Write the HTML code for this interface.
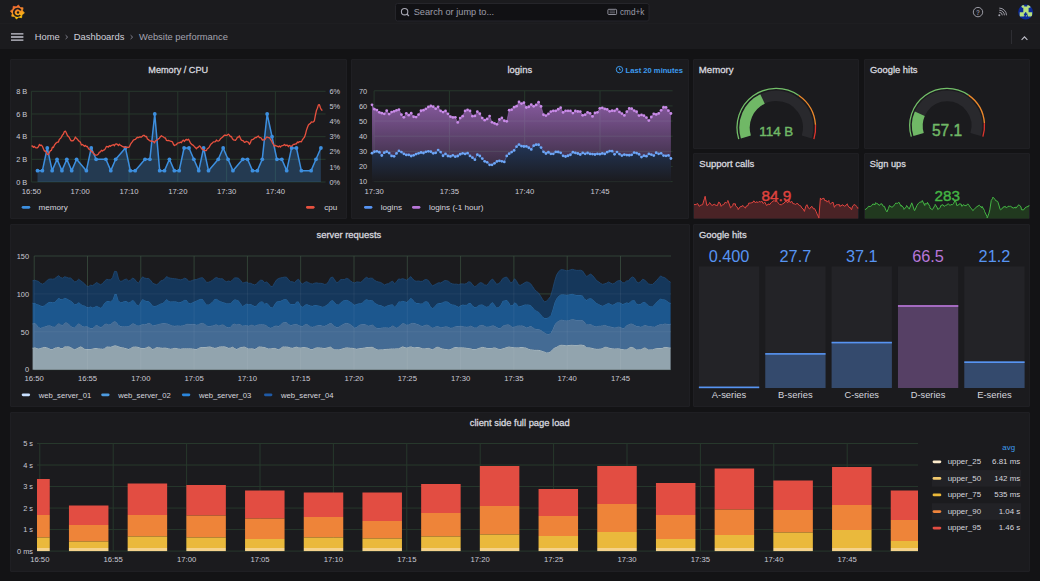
<!DOCTYPE html>
<html><head><meta charset="utf-8"><style>
*{margin:0;padding:0;box-sizing:border-box}
html,body{width:1040px;height:581px;overflow:hidden;background:#131315;font-family:"Liberation Sans",sans-serif}
.bar1{position:absolute;left:0;top:0;width:1040px;height:24px;background:#1b1b1e;border-bottom:1px solid #1e1e21}
.bar2{position:absolute;left:0;top:24px;width:1040px;height:25px;background:#1b1b1e}
.pn{position:absolute;background:#1b1b1e;border:1px solid #1f1f23;border-radius:1px}
svg{position:absolute;left:0;top:0}
</style></head><body>
<div class="bar1"></div><div class="bar2"></div>
<div class="pn" style="left:10px;top:59px;width:337px;height:160px"></div><div class="pn" style="left:351px;top:59px;width:338px;height:160px"></div><div class="pn" style="left:693px;top:59px;width:166px;height:90px"></div><div class="pn" style="left:864px;top:59px;width:166px;height:90px"></div><div class="pn" style="left:693px;top:153px;width:166px;height:66px"></div><div class="pn" style="left:864px;top:153px;width:166px;height:66px"></div><div class="pn" style="left:10px;top:224px;width:680px;height:183px"></div><div class="pn" style="left:693px;top:224px;width:337px;height:183px"></div><div class="pn" style="left:10px;top:412px;width:1020px;height:160px"></div>
<svg width="1040" height="581" viewBox="0 0 1040 581" font-family="Liberation Sans, sans-serif">
<defs><linearGradient id="lg" x1="0" y1="0" x2="0.3" y2="1"><stop offset="0" stop-color="#f05a34"/><stop offset="0.5" stop-color="#f68a2a"/><stop offset="1" stop-color="#fcc30c"/></linearGradient></defs><path d="M18.46,4.98 L20.14,7.46 L23.11,7.79 L22.54,10.73 L24.42,13.06 L21.94,14.74 L21.61,17.71 L18.67,17.14 L16.34,19.02 L14.66,16.54 L11.69,16.21 L12.26,13.27 L10.38,10.94 L12.86,9.26 L13.19,6.29 L16.13,6.86 Z" fill="url(#lg)" stroke="url(#lg)" stroke-width="0.7" stroke-linejoin="round"/><path d="M20.29,14.99 A3.8,3.8 0 1 1 20.89,10.40" fill="none" stroke="#1b1b1e" stroke-width="1.7"/><circle cx="18.0" cy="12.5" r="1.2" fill="#1b1b1e"/><rect x="395.5" y="3.5" width="253.5" height="17.5" rx="2" fill="#111114" stroke="#25252a" stroke-width="1"/><circle cx="404.6" cy="11.7" r="3.2" fill="none" stroke="#a8a8b4" stroke-width="1.1"/><path d="M406.9,14 L408.9,16" stroke="#a8a8b4" stroke-width="1.1"/><text x="413.7" y="15.1" font-size="9.23" fill="#9c9ca8">Search or jump to...</text><rect x="607.9" y="9.3" width="8.7" height="5.2" rx="0.8" fill="none" stroke="#9c9ca8" stroke-width="0.9"/><path d="M609.6,11 h5.4 M609.6,12.8 h5.4" stroke="#9c9ca8" stroke-width="0.6"/><text x="620" y="14.9" font-size="8.2" fill="#9c9ca8">cmd+k</text><circle cx="978" cy="12.1" r="4.7" fill="none" stroke="#a8a8b2" stroke-width="0.9"/><text x="978" y="14.5" font-size="6.4" fill="#88889a" text-anchor="middle" font-weight="bold">?</text><circle cx="999.3" cy="15.3" r="1.0" fill="#a8a8b2"/><path d="M999.3,12.3 A3,3 0 0 1 1002.3,15.3 M999.3,10.2 A5.1,5.1 0 0 1 1004.4,15.3 M999.3,8.1 A7.2,7.2 0 0 1 1006.5,15.3" fill="none" stroke="#a8a8b2" stroke-width="0.9"/><circle cx="1025.6" cy="12" r="7.4" fill="#0c2a9a"/><clipPath id="av"><circle cx="1025.6" cy="12" r="7.4"/></clipPath><g clip-path="url(#av)"><path d="M1021,5.3 h3.2 v1.1 h3 v-1.1 h3.2 v2.4 h-1.8 v4.5 h3.6 v4.4 h-4.2 v-1.3 h-0.9 v1.3 h-2.3 v-1.3 h-0.9 v1.3 h-4.2 v-4.4 h3.6 v-4.5 h-1.3 Z" fill="#b6e07e"/><path d="M1023.9,14.3 h3.5 M1025.65,12.2 v4.6" stroke="#0c2a9a" stroke-width="1.4"/></g><path d="M11,33.8 h12.4 M11,37 h12.4 M11,40.2 h12.4" stroke="#c8c8d2" stroke-width="1.3"/><text x="34.7" y="40.0" font-size="9.4" fill="#d0d0da">Home</text><path d="M65.6,35.2 l2,1.9 l-2,1.9" fill="none" stroke="#8c8c98" stroke-width="0.9"/><text x="73.8" y="40.0" font-size="9.4" fill="#d0d0da">Dashboards</text><path d="M130.6,35.2 l2,1.9 l-2,1.9" fill="none" stroke="#8c8c98" stroke-width="0.9"/><text x="139" y="40.0" font-size="9.4" fill="#a4a4b0">Website performance</text><path d="M1011.5,30 V44" stroke="#2e2e33" stroke-width="1"/><path d="M1021.6,39.8 l2.9,-2.9 l2.9,2.9" fill="none" stroke="#c0c0ca" stroke-width="1.1"/>
<text x="178.20" y="72.70" font-size="9.0" fill="#d6d6de" font-weight="normal" text-anchor="middle" stroke="#d6d6de" stroke-width="0.3" textLength="59.8" lengthAdjust="spacingAndGlyphs">Memory / CPU</text><line x1="31.4" y1="91.30" x2="325.6" y2="91.30" stroke="#27382c" stroke-width="1"/><text x="27.30" y="94.00" font-size="7.4" fill="#cacad4" font-weight="normal" text-anchor="end" >8 B</text><line x1="31.4" y1="113.97" x2="325.6" y2="113.97" stroke="#27382c" stroke-width="1"/><text x="27.30" y="116.67" font-size="7.4" fill="#cacad4" font-weight="normal" text-anchor="end" >6 B</text><line x1="31.4" y1="136.65" x2="325.6" y2="136.65" stroke="#27382c" stroke-width="1"/><text x="27.30" y="139.35" font-size="7.4" fill="#cacad4" font-weight="normal" text-anchor="end" >4 B</text><line x1="31.4" y1="159.32" x2="325.6" y2="159.32" stroke="#27382c" stroke-width="1"/><text x="27.30" y="162.02" font-size="7.4" fill="#cacad4" font-weight="normal" text-anchor="end" >2 B</text><line x1="31.4" y1="182.00" x2="325.6" y2="182.00" stroke="#27382c" stroke-width="1"/><text x="27.30" y="184.70" font-size="7.4" fill="#cacad4" font-weight="normal" text-anchor="end" >0 B</text><text x="329.50" y="94.00" font-size="7.4" fill="#cacad4" font-weight="normal" text-anchor="start" >6%</text><text x="329.50" y="109.12" font-size="7.4" fill="#cacad4" font-weight="normal" text-anchor="start" >5%</text><text x="329.50" y="124.23" font-size="7.4" fill="#cacad4" font-weight="normal" text-anchor="start" >4%</text><text x="329.50" y="139.35" font-size="7.4" fill="#cacad4" font-weight="normal" text-anchor="start" >3%</text><text x="329.50" y="154.47" font-size="7.4" fill="#cacad4" font-weight="normal" text-anchor="start" >2%</text><text x="329.50" y="169.58" font-size="7.4" fill="#cacad4" font-weight="normal" text-anchor="start" >1%</text><text x="329.50" y="184.70" font-size="7.4" fill="#cacad4" font-weight="normal" text-anchor="start" >0%</text><line x1="31.40" y1="91.3" x2="31.40" y2="182.0" stroke="#27382c" stroke-width="1"/><text x="31.40" y="194.30" font-size="7.7" fill="#cacad4" font-weight="normal" text-anchor="middle" >16:50</text><line x1="80.20" y1="91.3" x2="80.20" y2="182.0" stroke="#27382c" stroke-width="1"/><text x="80.20" y="194.30" font-size="7.7" fill="#cacad4" font-weight="normal" text-anchor="middle" >17:00</text><line x1="129.00" y1="91.3" x2="129.00" y2="182.0" stroke="#27382c" stroke-width="1"/><text x="129.00" y="194.30" font-size="7.7" fill="#cacad4" font-weight="normal" text-anchor="middle" >17:10</text><line x1="177.80" y1="91.3" x2="177.80" y2="182.0" stroke="#27382c" stroke-width="1"/><text x="177.80" y="194.30" font-size="7.7" fill="#cacad4" font-weight="normal" text-anchor="middle" >17:20</text><line x1="226.60" y1="91.3" x2="226.60" y2="182.0" stroke="#27382c" stroke-width="1"/><text x="226.60" y="194.30" font-size="7.7" fill="#cacad4" font-weight="normal" text-anchor="middle" >17:30</text><line x1="275.40" y1="91.3" x2="275.40" y2="182.0" stroke="#27382c" stroke-width="1"/><text x="275.40" y="194.30" font-size="7.7" fill="#cacad4" font-weight="normal" text-anchor="middle" >17:40</text><path d="M37.50,170.66 L42.39,170.66 L47.27,147.99 L52.16,170.66 L57.04,159.32 L61.93,170.66 L66.82,159.32 L71.70,170.66 L76.59,159.32 L86.36,170.66 L91.25,147.99 L96.13,159.32 L105.90,159.32 L110.79,170.66 L115.68,159.32 L125.45,147.99 L130.33,170.66 L135.22,170.66 L144.99,159.32 L149.88,159.32 L154.76,113.97 L159.65,170.66 L164.54,170.66 L169.42,159.32 L174.31,170.66 L179.19,170.66 L184.08,147.99 L188.97,147.99 L193.85,159.32 L198.74,170.66 L203.62,147.99 L208.51,170.66 L218.28,159.32 L223.17,147.99 L228.05,159.32 L232.94,170.66 L242.71,159.32 L247.60,159.32 L252.48,170.66 L257.37,170.66 L262.26,159.32 L267.14,113.97 L272.03,136.65 L276.91,159.32 L281.80,159.32 L286.69,170.66 L291.57,147.99 L296.46,147.99 L301.34,170.66 L311.12,170.66 L316.00,159.32 L320.89,147.99 L320.89,182.0 L37.50,182.0 Z" fill="#3d8fdf" fill-opacity="0.27"/><path d="M37.50,170.66 L42.39,170.66 L47.27,147.99 L52.16,170.66 L57.04,159.32 L61.93,170.66 L66.82,159.32 L71.70,170.66 L76.59,159.32 L86.36,170.66 L91.25,147.99 L96.13,159.32 L105.90,159.32 L110.79,170.66 L115.68,159.32 L125.45,147.99 L130.33,170.66 L135.22,170.66 L144.99,159.32 L149.88,159.32 L154.76,113.97 L159.65,170.66 L164.54,170.66 L169.42,159.32 L174.31,170.66 L179.19,170.66 L184.08,147.99 L188.97,147.99 L193.85,159.32 L198.74,170.66 L203.62,147.99 L208.51,170.66 L218.28,159.32 L223.17,147.99 L228.05,159.32 L232.94,170.66 L242.71,159.32 L247.60,159.32 L252.48,170.66 L257.37,170.66 L262.26,159.32 L267.14,113.97 L272.03,136.65 L276.91,159.32 L281.80,159.32 L286.69,170.66 L291.57,147.99 L296.46,147.99 L301.34,170.66 L311.12,170.66 L316.00,159.32 L320.89,147.99" fill="none" stroke="#3d8fdf" stroke-width="1.5" stroke-linejoin="round"/><circle cx="37.50" cy="170.66" r="1.9" fill="#3d8fdf"/><circle cx="42.39" cy="170.66" r="1.9" fill="#3d8fdf"/><circle cx="47.27" cy="147.99" r="1.9" fill="#3d8fdf"/><circle cx="52.16" cy="170.66" r="1.9" fill="#3d8fdf"/><circle cx="57.04" cy="159.32" r="1.9" fill="#3d8fdf"/><circle cx="61.93" cy="170.66" r="1.9" fill="#3d8fdf"/><circle cx="66.82" cy="159.32" r="1.9" fill="#3d8fdf"/><circle cx="71.70" cy="170.66" r="1.9" fill="#3d8fdf"/><circle cx="76.59" cy="159.32" r="1.9" fill="#3d8fdf"/><circle cx="86.36" cy="170.66" r="1.9" fill="#3d8fdf"/><circle cx="91.25" cy="147.99" r="1.9" fill="#3d8fdf"/><circle cx="96.13" cy="159.32" r="1.9" fill="#3d8fdf"/><circle cx="105.90" cy="159.32" r="1.9" fill="#3d8fdf"/><circle cx="110.79" cy="170.66" r="1.9" fill="#3d8fdf"/><circle cx="115.68" cy="159.32" r="1.9" fill="#3d8fdf"/><circle cx="125.45" cy="147.99" r="1.9" fill="#3d8fdf"/><circle cx="130.33" cy="170.66" r="1.9" fill="#3d8fdf"/><circle cx="135.22" cy="170.66" r="1.9" fill="#3d8fdf"/><circle cx="144.99" cy="159.32" r="1.9" fill="#3d8fdf"/><circle cx="149.88" cy="159.32" r="1.9" fill="#3d8fdf"/><circle cx="154.76" cy="113.97" r="1.9" fill="#3d8fdf"/><circle cx="159.65" cy="170.66" r="1.9" fill="#3d8fdf"/><circle cx="164.54" cy="170.66" r="1.9" fill="#3d8fdf"/><circle cx="169.42" cy="159.32" r="1.9" fill="#3d8fdf"/><circle cx="174.31" cy="170.66" r="1.9" fill="#3d8fdf"/><circle cx="179.19" cy="170.66" r="1.9" fill="#3d8fdf"/><circle cx="184.08" cy="147.99" r="1.9" fill="#3d8fdf"/><circle cx="188.97" cy="147.99" r="1.9" fill="#3d8fdf"/><circle cx="193.85" cy="159.32" r="1.9" fill="#3d8fdf"/><circle cx="198.74" cy="170.66" r="1.9" fill="#3d8fdf"/><circle cx="203.62" cy="147.99" r="1.9" fill="#3d8fdf"/><circle cx="208.51" cy="170.66" r="1.9" fill="#3d8fdf"/><circle cx="218.28" cy="159.32" r="1.9" fill="#3d8fdf"/><circle cx="223.17" cy="147.99" r="1.9" fill="#3d8fdf"/><circle cx="228.05" cy="159.32" r="1.9" fill="#3d8fdf"/><circle cx="232.94" cy="170.66" r="1.9" fill="#3d8fdf"/><circle cx="242.71" cy="159.32" r="1.9" fill="#3d8fdf"/><circle cx="247.60" cy="159.32" r="1.9" fill="#3d8fdf"/><circle cx="252.48" cy="170.66" r="1.9" fill="#3d8fdf"/><circle cx="257.37" cy="170.66" r="1.9" fill="#3d8fdf"/><circle cx="262.26" cy="159.32" r="1.9" fill="#3d8fdf"/><circle cx="267.14" cy="113.97" r="1.9" fill="#3d8fdf"/><circle cx="272.03" cy="136.65" r="1.9" fill="#3d8fdf"/><circle cx="276.91" cy="159.32" r="1.9" fill="#3d8fdf"/><circle cx="281.80" cy="159.32" r="1.9" fill="#3d8fdf"/><circle cx="286.69" cy="170.66" r="1.9" fill="#3d8fdf"/><circle cx="291.57" cy="147.99" r="1.9" fill="#3d8fdf"/><circle cx="296.46" cy="147.99" r="1.9" fill="#3d8fdf"/><circle cx="301.34" cy="170.66" r="1.9" fill="#3d8fdf"/><circle cx="311.12" cy="170.66" r="1.9" fill="#3d8fdf"/><circle cx="316.00" cy="159.32" r="1.9" fill="#3d8fdf"/><circle cx="320.89" cy="147.99" r="1.9" fill="#3d8fdf"/><path d="M31.40,146.09 L32.40,145.99 L33.40,147.24 L34.40,146.33 L35.40,147.65 L36.40,147.85 L37.40,147.76 L38.40,146.83 L39.40,144.39 L40.40,145.51 L41.40,145.12 L42.40,146.33 L43.40,148.67 L44.40,151.12 L45.40,150.96 L46.40,152.41 L47.40,154.47 L48.40,154.69 L49.40,152.45 L50.40,150.59 L51.40,150.29 L52.40,147.18 L53.40,147.56 L54.40,145.17 L55.40,143.81 L56.40,142.75 L57.40,142.14 L58.40,142.01 L59.40,139.24 L60.40,138.54 L61.40,137.16 L62.40,135.12 L63.40,133.97 L64.40,131.50 L65.40,131.18 L66.40,132.98 L67.40,135.42 L68.40,136.42 L69.40,137.69 L70.40,139.73 L71.40,140.97 L72.40,140.76 L73.40,140.50 L74.40,139.06 L75.40,137.03 L76.40,138.45 L77.40,139.10 L78.40,140.55 L79.40,141.47 L80.40,142.09 L81.40,144.98 L82.40,144.52 L83.40,145.37 L84.40,146.30 L85.40,145.34 L86.40,146.64 L87.40,146.49 L88.40,148.49 L89.40,149.51 L90.40,150.13 L91.40,151.73 L92.40,151.61 L93.40,153.37 L94.40,154.17 L95.40,155.14 L96.40,155.07 L97.40,154.83 L98.40,154.04 L99.40,152.10 L100.40,151.97 L101.40,150.26 L102.40,151.04 L103.40,150.17 L104.40,149.86 L105.40,148.52 L106.40,146.52 L107.40,146.63 L108.40,147.09 L109.40,145.70 L110.40,146.35 L111.40,145.46 L112.40,145.06 L113.40,144.63 L114.40,145.70 L115.40,144.07 L116.40,143.96 L117.40,144.35 L118.40,145.56 L119.40,144.23 L120.40,145.22 L121.40,145.68 L122.40,146.60 L123.40,146.73 L124.40,147.41 L125.40,146.91 L126.40,147.65 L127.40,147.15 L128.40,147.45 L129.40,146.85 L130.40,144.43 L131.40,142.98 L132.40,141.60 L133.40,140.10 L134.40,139.73 L135.40,139.44 L136.40,138.29 L137.40,137.27 L138.40,137.60 L139.40,137.00 L140.40,136.89 L141.40,137.17 L142.40,136.14 L143.40,135.29 L144.40,135.45 L145.40,136.57 L146.40,136.33 L147.40,139.02 L148.40,139.56 L149.40,140.50 L150.40,141.10 L151.40,140.93 L152.40,141.45 L153.40,141.35 L154.40,142.92 L155.40,141.05 L156.40,140.31 L157.40,139.84 L158.40,138.87 L159.40,138.22 L160.40,136.65 L161.40,135.68 L162.40,136.48 L163.40,136.88 L164.40,137.91 L165.40,137.89 L166.40,140.34 L167.40,140.57 L168.40,140.29 L169.40,140.74 L170.40,141.18 L171.40,141.47 L172.40,141.81 L173.40,144.26 L174.40,145.55 L175.40,145.01 L176.40,144.55 L177.40,143.25 L178.40,142.78 L179.40,142.76 L180.40,142.11 L181.40,142.74 L182.40,140.90 L183.40,140.13 L184.40,141.48 L185.40,140.14 L186.40,139.37 L187.40,140.16 L188.40,139.13 L189.40,140.83 L190.40,142.98 L191.40,144.00 L192.40,144.91 L193.40,145.29 L194.40,146.75 L195.40,147.60 L196.40,148.73 L197.40,147.50 L198.40,147.24 L199.40,145.93 L200.40,146.47 L201.40,148.39 L202.40,149.49 L203.40,149.78 L204.40,150.19 L205.40,150.71 L206.40,150.54 L207.40,148.52 L208.40,148.10 L209.40,146.77 L210.40,144.90 L211.40,143.64 L212.40,142.90 L213.40,141.83 L214.40,141.95 L215.40,141.73 L216.40,139.97 L217.40,140.95 L218.40,141.05 L219.40,140.51 L220.40,138.83 L221.40,138.04 L222.40,137.29 L223.40,136.23 L224.40,135.25 L225.40,135.14 L226.40,135.45 L227.40,135.08 L228.40,134.10 L229.40,135.15 L230.40,136.69 L231.40,136.51 L232.40,138.77 L233.40,139.77 L234.40,140.02 L235.40,140.45 L236.40,139.10 L237.40,137.25 L238.40,137.22 L239.40,135.89 L240.40,138.33 L241.40,140.17 L242.40,140.52 L243.40,140.96 L244.40,142.30 L245.40,142.10 L246.40,141.35 L247.40,141.76 L248.40,142.31 L249.40,144.32 L250.40,142.67 L251.40,139.85 L252.40,139.71 L253.40,139.18 L254.40,138.29 L255.40,137.42 L256.40,137.57 L257.40,136.48 L258.40,136.00 L259.40,137.66 L260.40,137.58 L261.40,138.34 L262.40,140.15 L263.40,139.79 L264.40,139.92 L265.40,139.07 L266.40,137.09 L267.40,137.19 L268.40,137.52 L269.40,137.67 L270.40,139.17 L271.40,140.52 L272.40,142.84 L273.40,144.26 L274.40,146.28 L275.40,145.42 L276.40,145.88 L277.40,146.27 L278.40,146.91 L279.40,145.94 L280.40,146.94 L281.40,145.86 L282.40,145.67 L283.40,145.40 L284.40,144.42 L285.40,145.51 L286.40,145.25 L287.40,145.11 L288.40,146.70 L289.40,145.45 L290.40,146.05 L291.40,146.22 L292.40,145.38 L293.40,144.42 L294.40,144.30 L295.40,143.88 L296.40,143.84 L297.40,141.98 L298.40,142.58 L299.40,141.71 L300.40,141.52 L301.40,141.83 L302.40,139.80 L303.40,138.41 L304.40,137.31 L305.40,134.54 L306.40,130.35 L307.40,127.44 L308.40,125.00 L309.40,124.02 L310.40,123.38 L311.40,121.91 L312.40,122.07 L313.40,121.96 L314.40,120.72 L315.40,115.24 L316.40,110.59 L317.40,108.28 L318.40,104.91 L319.40,104.66 L320.40,107.68 L321.40,109.72 L322.40,110.56" fill="none" stroke="#e8513f" stroke-width="1.3" stroke-linejoin="round"/><rect x="21.7" y="206.0" width="8.6" height="2.7" rx="1.35" fill="#3d8fdf"/><text x="38.60" y="210.00" font-size="8.1" fill="#d6d6de" font-weight="normal" text-anchor="start" >memory</text><rect x="306" y="206.0" width="8.6" height="2.7" rx="1.35" fill="#e8513f"/><text x="337.20" y="210.00" font-size="8.1" fill="#d6d6de" font-weight="normal" text-anchor="end" >cpu</text><text x="519.80" y="72.80" font-size="9.0" fill="#d6d6de" font-weight="normal" text-anchor="middle" stroke="#d6d6de" stroke-width="0.3" textLength="24.6" lengthAdjust="spacingAndGlyphs">logins</text><text x="683.00" y="72.50" font-size="7.6" fill="#3d9bf0" font-weight="bold" text-anchor="end" >Last 20 minutes</text><circle cx="619.5" cy="69.6" r="3.2" fill="none" stroke="#3d9bf0" stroke-width="1"/><path d="M619.5,67.8 V69.8 H620.9" fill="none" stroke="#3d9bf0" stroke-width="0.9"/><line x1="374.1" y1="90.80" x2="672.6" y2="90.80" stroke="#27382c" stroke-width="1"/><text x="367.20" y="93.50" font-size="7.4" fill="#cacad4" font-weight="normal" text-anchor="end" >70</text><line x1="374.1" y1="105.93" x2="672.6" y2="105.93" stroke="#27382c" stroke-width="1"/><text x="367.20" y="108.63" font-size="7.4" fill="#cacad4" font-weight="normal" text-anchor="end" >60</text><line x1="374.1" y1="121.07" x2="672.6" y2="121.07" stroke="#27382c" stroke-width="1"/><text x="367.20" y="123.77" font-size="7.4" fill="#cacad4" font-weight="normal" text-anchor="end" >50</text><line x1="374.1" y1="136.20" x2="672.6" y2="136.20" stroke="#27382c" stroke-width="1"/><text x="367.20" y="138.90" font-size="7.4" fill="#cacad4" font-weight="normal" text-anchor="end" >40</text><line x1="374.1" y1="151.33" x2="672.6" y2="151.33" stroke="#27382c" stroke-width="1"/><text x="367.20" y="154.03" font-size="7.4" fill="#cacad4" font-weight="normal" text-anchor="end" >30</text><line x1="374.1" y1="166.47" x2="672.6" y2="166.47" stroke="#27382c" stroke-width="1"/><text x="367.20" y="169.17" font-size="7.4" fill="#cacad4" font-weight="normal" text-anchor="end" >20</text><line x1="374.1" y1="181.60" x2="672.6" y2="181.60" stroke="#27382c" stroke-width="1"/><text x="367.20" y="184.30" font-size="7.4" fill="#cacad4" font-weight="normal" text-anchor="end" >10</text><line x1="374.10" y1="90.8" x2="374.10" y2="181.6" stroke="#27382c" stroke-width="1"/><text x="374.10" y="194.30" font-size="7.7" fill="#cacad4" font-weight="normal" text-anchor="middle" >17:30</text><line x1="449.40" y1="90.8" x2="449.40" y2="181.6" stroke="#27382c" stroke-width="1"/><text x="449.40" y="194.30" font-size="7.7" fill="#cacad4" font-weight="normal" text-anchor="middle" >17:35</text><line x1="524.70" y1="90.8" x2="524.70" y2="181.6" stroke="#27382c" stroke-width="1"/><text x="524.70" y="194.30" font-size="7.7" fill="#cacad4" font-weight="normal" text-anchor="middle" >17:40</text><line x1="600.00" y1="90.8" x2="600.00" y2="181.6" stroke="#27382c" stroke-width="1"/><text x="600.00" y="194.30" font-size="7.7" fill="#cacad4" font-weight="normal" text-anchor="middle" >17:45</text><defs><linearGradient id="gp" x1="0" y1="0" x2="0" y2="1"><stop offset="0" stop-color="#b877d9" stop-opacity="0.68"/><stop offset="1" stop-color="#b877d9" stop-opacity="0.08"/></linearGradient><linearGradient id="gb" x1="0" y1="0" x2="0" y2="1"><stop offset="0" stop-color="#223556"/><stop offset="1" stop-color="#1b1b1f"/></linearGradient></defs><path d="M372.00,104.82 L374.45,109.22 L376.90,110.04 L379.35,112.32 L381.80,113.16 L384.25,113.78 L386.70,110.68 L389.15,114.10 L391.60,112.09 L394.05,111.28 L396.50,110.34 L398.95,109.59 L401.40,114.54 L403.85,117.31 L406.30,113.32 L408.75,115.18 L411.20,113.24 L413.65,116.76 L416.10,117.03 L418.55,114.57 L421.00,110.75 L423.45,110.15 L425.90,108.85 L428.35,106.96 L430.80,106.01 L433.25,106.63 L435.70,108.65 L438.15,106.83 L440.60,110.82 L443.05,112.08 L445.50,110.97 L447.95,113.83 L450.40,116.59 L452.85,117.41 L455.30,117.34 L457.75,122.47 L460.20,118.07 L462.65,116.16 L465.10,110.96 L467.55,109.86 L470.00,110.93 L472.45,116.19 L474.90,115.93 L477.35,111.71 L479.80,113.77 L482.25,118.08 L484.70,120.18 L487.15,118.93 L489.60,116.07 L492.05,122.34 L494.50,123.29 L496.95,124.28 L499.40,119.50 L501.85,117.94 L504.30,120.77 L506.75,121.28 L509.20,110.14 L511.65,109.66 L514.10,107.14 L516.55,106.15 L519.00,101.89 L521.45,103.60 L523.90,102.67 L526.35,107.50 L528.80,106.74 L531.25,104.59 L533.70,106.34 L536.15,104.88 L538.60,102.18 L541.05,106.40 L543.50,114.77 L545.95,115.57 L548.40,113.90 L550.85,111.54 L553.30,110.79 L555.75,110.78 L558.20,109.24 L560.65,107.72 L563.10,112.39 L565.55,110.83 L568.00,110.81 L570.45,110.93 L572.90,113.09 L575.35,111.02 L577.80,111.49 L580.25,111.58 L582.70,115.29 L585.15,114.64 L587.60,112.28 L590.05,113.34 L592.50,116.40 L594.95,112.92 L597.40,112.36 L599.85,108.35 L602.30,107.78 L604.75,108.94 L607.20,109.39 L609.65,111.34 L612.10,110.72 L614.55,110.78 L617.00,109.17 L619.45,111.91 L621.90,113.56 L624.35,115.41 L626.80,111.63 L629.25,108.47 L631.70,108.68 L634.15,110.60 L636.60,111.73 L639.05,115.58 L641.50,114.91 L643.95,115.70 L646.40,117.53 L648.85,120.55 L651.30,116.99 L653.75,113.78 L656.20,114.47 L658.65,113.45 L661.10,110.33 L663.55,107.25 L666.00,107.33 L668.45,110.66 L670.90,113.51 L670.90,181.6 L372.00,181.6 Z" fill="url(#gp)"/><path d="M372.00,153.19 L374.45,151.75 L376.90,151.34 L379.35,152.24 L381.80,155.48 L384.25,152.72 L386.70,151.71 L389.15,153.03 L391.60,155.88 L394.05,156.28 L396.50,153.42 L398.95,150.88 L401.40,152.06 L403.85,153.85 L406.30,154.96 L408.75,154.80 L411.20,155.99 L413.65,155.32 L416.10,154.05 L418.55,153.37 L421.00,152.48 L423.45,152.98 L425.90,151.85 L428.35,151.33 L430.80,151.69 L433.25,153.32 L435.70,152.84 L438.15,150.12 L440.60,152.06 L443.05,155.74 L445.50,153.89 L447.95,156.01 L450.40,156.43 L452.85,155.32 L455.30,156.68 L457.75,155.98 L460.20,154.27 L462.65,153.34 L465.10,153.94 L467.55,153.19 L470.00,155.90 L472.45,157.65 L474.90,159.65 L477.35,154.67 L479.80,155.99 L482.25,158.58 L484.70,161.29 L487.15,162.32 L489.60,164.80 L492.05,164.79 L494.50,163.36 L496.95,161.44 L499.40,160.85 L501.85,161.33 L504.30,161.89 L506.75,155.95 L509.20,153.70 L511.65,152.10 L514.10,150.38 L516.55,146.66 L519.00,144.54 L521.45,146.11 L523.90,146.48 L526.35,146.45 L528.80,147.74 L531.25,149.39 L533.70,145.76 L536.15,144.69 L538.60,144.76 L541.05,147.61 L543.50,151.82 L545.95,153.49 L548.40,152.27 L550.85,153.81 L553.30,153.82 L555.75,151.97 L558.20,151.99 L560.65,152.79 L563.10,155.81 L565.55,156.49 L568.00,155.74 L570.45,154.73 L572.90,152.24 L575.35,152.93 L577.80,153.52 L580.25,154.52 L582.70,152.93 L585.15,153.83 L587.60,153.01 L590.05,153.88 L592.50,154.12 L594.95,154.51 L597.40,153.83 L599.85,154.14 L602.30,153.43 L604.75,153.95 L607.20,152.18 L609.65,151.03 L612.10,151.20 L614.55,154.35 L617.00,152.08 L619.45,154.04 L621.90,155.55 L624.35,154.61 L626.80,155.05 L629.25,155.24 L631.70,154.84 L634.15,152.57 L636.60,153.10 L639.05,154.24 L641.50,157.08 L643.95,155.68 L646.40,156.14 L648.85,153.93 L651.30,154.58 L653.75,155.62 L656.20,152.75 L658.65,153.86 L661.10,153.33 L663.55,155.53 L666.00,155.84 L668.45,155.39 L670.90,158.48 L670.90,181.6 L372.00,181.6 Z" fill="url(#gb)"/><path d="M372.00,104.82 L374.45,109.22 L376.90,110.04 L379.35,112.32 L381.80,113.16 L384.25,113.78 L386.70,110.68 L389.15,114.10 L391.60,112.09 L394.05,111.28 L396.50,110.34 L398.95,109.59 L401.40,114.54 L403.85,117.31 L406.30,113.32 L408.75,115.18 L411.20,113.24 L413.65,116.76 L416.10,117.03 L418.55,114.57 L421.00,110.75 L423.45,110.15 L425.90,108.85 L428.35,106.96 L430.80,106.01 L433.25,106.63 L435.70,108.65 L438.15,106.83 L440.60,110.82 L443.05,112.08 L445.50,110.97 L447.95,113.83 L450.40,116.59 L452.85,117.41 L455.30,117.34 L457.75,122.47 L460.20,118.07 L462.65,116.16 L465.10,110.96 L467.55,109.86 L470.00,110.93 L472.45,116.19 L474.90,115.93 L477.35,111.71 L479.80,113.77 L482.25,118.08 L484.70,120.18 L487.15,118.93 L489.60,116.07 L492.05,122.34 L494.50,123.29 L496.95,124.28 L499.40,119.50 L501.85,117.94 L504.30,120.77 L506.75,121.28 L509.20,110.14 L511.65,109.66 L514.10,107.14 L516.55,106.15 L519.00,101.89 L521.45,103.60 L523.90,102.67 L526.35,107.50 L528.80,106.74 L531.25,104.59 L533.70,106.34 L536.15,104.88 L538.60,102.18 L541.05,106.40 L543.50,114.77 L545.95,115.57 L548.40,113.90 L550.85,111.54 L553.30,110.79 L555.75,110.78 L558.20,109.24 L560.65,107.72 L563.10,112.39 L565.55,110.83 L568.00,110.81 L570.45,110.93 L572.90,113.09 L575.35,111.02 L577.80,111.49 L580.25,111.58 L582.70,115.29 L585.15,114.64 L587.60,112.28 L590.05,113.34 L592.50,116.40 L594.95,112.92 L597.40,112.36 L599.85,108.35 L602.30,107.78 L604.75,108.94 L607.20,109.39 L609.65,111.34 L612.10,110.72 L614.55,110.78 L617.00,109.17 L619.45,111.91 L621.90,113.56 L624.35,115.41 L626.80,111.63 L629.25,108.47 L631.70,108.68 L634.15,110.60 L636.60,111.73 L639.05,115.58 L641.50,114.91 L643.95,115.70 L646.40,117.53 L648.85,120.55 L651.30,116.99 L653.75,113.78 L656.20,114.47 L658.65,113.45 L661.10,110.33 L663.55,107.25 L666.00,107.33 L668.45,110.66 L670.90,113.51" fill="none" stroke="#b877d9" stroke-width="0.8" stroke-opacity="0.6"/><path d="M372.00,153.19 L374.45,151.75 L376.90,151.34 L379.35,152.24 L381.80,155.48 L384.25,152.72 L386.70,151.71 L389.15,153.03 L391.60,155.88 L394.05,156.28 L396.50,153.42 L398.95,150.88 L401.40,152.06 L403.85,153.85 L406.30,154.96 L408.75,154.80 L411.20,155.99 L413.65,155.32 L416.10,154.05 L418.55,153.37 L421.00,152.48 L423.45,152.98 L425.90,151.85 L428.35,151.33 L430.80,151.69 L433.25,153.32 L435.70,152.84 L438.15,150.12 L440.60,152.06 L443.05,155.74 L445.50,153.89 L447.95,156.01 L450.40,156.43 L452.85,155.32 L455.30,156.68 L457.75,155.98 L460.20,154.27 L462.65,153.34 L465.10,153.94 L467.55,153.19 L470.00,155.90 L472.45,157.65 L474.90,159.65 L477.35,154.67 L479.80,155.99 L482.25,158.58 L484.70,161.29 L487.15,162.32 L489.60,164.80 L492.05,164.79 L494.50,163.36 L496.95,161.44 L499.40,160.85 L501.85,161.33 L504.30,161.89 L506.75,155.95 L509.20,153.70 L511.65,152.10 L514.10,150.38 L516.55,146.66 L519.00,144.54 L521.45,146.11 L523.90,146.48 L526.35,146.45 L528.80,147.74 L531.25,149.39 L533.70,145.76 L536.15,144.69 L538.60,144.76 L541.05,147.61 L543.50,151.82 L545.95,153.49 L548.40,152.27 L550.85,153.81 L553.30,153.82 L555.75,151.97 L558.20,151.99 L560.65,152.79 L563.10,155.81 L565.55,156.49 L568.00,155.74 L570.45,154.73 L572.90,152.24 L575.35,152.93 L577.80,153.52 L580.25,154.52 L582.70,152.93 L585.15,153.83 L587.60,153.01 L590.05,153.88 L592.50,154.12 L594.95,154.51 L597.40,153.83 L599.85,154.14 L602.30,153.43 L604.75,153.95 L607.20,152.18 L609.65,151.03 L612.10,151.20 L614.55,154.35 L617.00,152.08 L619.45,154.04 L621.90,155.55 L624.35,154.61 L626.80,155.05 L629.25,155.24 L631.70,154.84 L634.15,152.57 L636.60,153.10 L639.05,154.24 L641.50,157.08 L643.95,155.68 L646.40,156.14 L648.85,153.93 L651.30,154.58 L653.75,155.62 L656.20,152.75 L658.65,153.86 L661.10,153.33 L663.55,155.53 L666.00,155.84 L668.45,155.39 L670.90,158.48" fill="none" stroke="#5794f2" stroke-width="0.8" stroke-opacity="0.6"/><circle cx="372.00" cy="104.82" r="1.4" fill="#c98be8"/><circle cx="374.45" cy="109.22" r="1.4" fill="#c98be8"/><circle cx="376.90" cy="110.04" r="1.4" fill="#c98be8"/><circle cx="379.35" cy="112.32" r="1.4" fill="#c98be8"/><circle cx="381.80" cy="113.16" r="1.4" fill="#c98be8"/><circle cx="384.25" cy="113.78" r="1.4" fill="#c98be8"/><circle cx="386.70" cy="110.68" r="1.4" fill="#c98be8"/><circle cx="389.15" cy="114.10" r="1.4" fill="#c98be8"/><circle cx="391.60" cy="112.09" r="1.4" fill="#c98be8"/><circle cx="394.05" cy="111.28" r="1.4" fill="#c98be8"/><circle cx="396.50" cy="110.34" r="1.4" fill="#c98be8"/><circle cx="398.95" cy="109.59" r="1.4" fill="#c98be8"/><circle cx="401.40" cy="114.54" r="1.4" fill="#c98be8"/><circle cx="403.85" cy="117.31" r="1.4" fill="#c98be8"/><circle cx="406.30" cy="113.32" r="1.4" fill="#c98be8"/><circle cx="408.75" cy="115.18" r="1.4" fill="#c98be8"/><circle cx="411.20" cy="113.24" r="1.4" fill="#c98be8"/><circle cx="413.65" cy="116.76" r="1.4" fill="#c98be8"/><circle cx="416.10" cy="117.03" r="1.4" fill="#c98be8"/><circle cx="418.55" cy="114.57" r="1.4" fill="#c98be8"/><circle cx="421.00" cy="110.75" r="1.4" fill="#c98be8"/><circle cx="423.45" cy="110.15" r="1.4" fill="#c98be8"/><circle cx="425.90" cy="108.85" r="1.4" fill="#c98be8"/><circle cx="428.35" cy="106.96" r="1.4" fill="#c98be8"/><circle cx="430.80" cy="106.01" r="1.4" fill="#c98be8"/><circle cx="433.25" cy="106.63" r="1.4" fill="#c98be8"/><circle cx="435.70" cy="108.65" r="1.4" fill="#c98be8"/><circle cx="438.15" cy="106.83" r="1.4" fill="#c98be8"/><circle cx="440.60" cy="110.82" r="1.4" fill="#c98be8"/><circle cx="443.05" cy="112.08" r="1.4" fill="#c98be8"/><circle cx="445.50" cy="110.97" r="1.4" fill="#c98be8"/><circle cx="447.95" cy="113.83" r="1.4" fill="#c98be8"/><circle cx="450.40" cy="116.59" r="1.4" fill="#c98be8"/><circle cx="452.85" cy="117.41" r="1.4" fill="#c98be8"/><circle cx="455.30" cy="117.34" r="1.4" fill="#c98be8"/><circle cx="457.75" cy="122.47" r="1.4" fill="#c98be8"/><circle cx="460.20" cy="118.07" r="1.4" fill="#c98be8"/><circle cx="462.65" cy="116.16" r="1.4" fill="#c98be8"/><circle cx="465.10" cy="110.96" r="1.4" fill="#c98be8"/><circle cx="467.55" cy="109.86" r="1.4" fill="#c98be8"/><circle cx="470.00" cy="110.93" r="1.4" fill="#c98be8"/><circle cx="472.45" cy="116.19" r="1.4" fill="#c98be8"/><circle cx="474.90" cy="115.93" r="1.4" fill="#c98be8"/><circle cx="477.35" cy="111.71" r="1.4" fill="#c98be8"/><circle cx="479.80" cy="113.77" r="1.4" fill="#c98be8"/><circle cx="482.25" cy="118.08" r="1.4" fill="#c98be8"/><circle cx="484.70" cy="120.18" r="1.4" fill="#c98be8"/><circle cx="487.15" cy="118.93" r="1.4" fill="#c98be8"/><circle cx="489.60" cy="116.07" r="1.4" fill="#c98be8"/><circle cx="492.05" cy="122.34" r="1.4" fill="#c98be8"/><circle cx="494.50" cy="123.29" r="1.4" fill="#c98be8"/><circle cx="496.95" cy="124.28" r="1.4" fill="#c98be8"/><circle cx="499.40" cy="119.50" r="1.4" fill="#c98be8"/><circle cx="501.85" cy="117.94" r="1.4" fill="#c98be8"/><circle cx="504.30" cy="120.77" r="1.4" fill="#c98be8"/><circle cx="506.75" cy="121.28" r="1.4" fill="#c98be8"/><circle cx="509.20" cy="110.14" r="1.4" fill="#c98be8"/><circle cx="511.65" cy="109.66" r="1.4" fill="#c98be8"/><circle cx="514.10" cy="107.14" r="1.4" fill="#c98be8"/><circle cx="516.55" cy="106.15" r="1.4" fill="#c98be8"/><circle cx="519.00" cy="101.89" r="1.4" fill="#c98be8"/><circle cx="521.45" cy="103.60" r="1.4" fill="#c98be8"/><circle cx="523.90" cy="102.67" r="1.4" fill="#c98be8"/><circle cx="526.35" cy="107.50" r="1.4" fill="#c98be8"/><circle cx="528.80" cy="106.74" r="1.4" fill="#c98be8"/><circle cx="531.25" cy="104.59" r="1.4" fill="#c98be8"/><circle cx="533.70" cy="106.34" r="1.4" fill="#c98be8"/><circle cx="536.15" cy="104.88" r="1.4" fill="#c98be8"/><circle cx="538.60" cy="102.18" r="1.4" fill="#c98be8"/><circle cx="541.05" cy="106.40" r="1.4" fill="#c98be8"/><circle cx="543.50" cy="114.77" r="1.4" fill="#c98be8"/><circle cx="545.95" cy="115.57" r="1.4" fill="#c98be8"/><circle cx="548.40" cy="113.90" r="1.4" fill="#c98be8"/><circle cx="550.85" cy="111.54" r="1.4" fill="#c98be8"/><circle cx="553.30" cy="110.79" r="1.4" fill="#c98be8"/><circle cx="555.75" cy="110.78" r="1.4" fill="#c98be8"/><circle cx="558.20" cy="109.24" r="1.4" fill="#c98be8"/><circle cx="560.65" cy="107.72" r="1.4" fill="#c98be8"/><circle cx="563.10" cy="112.39" r="1.4" fill="#c98be8"/><circle cx="565.55" cy="110.83" r="1.4" fill="#c98be8"/><circle cx="568.00" cy="110.81" r="1.4" fill="#c98be8"/><circle cx="570.45" cy="110.93" r="1.4" fill="#c98be8"/><circle cx="572.90" cy="113.09" r="1.4" fill="#c98be8"/><circle cx="575.35" cy="111.02" r="1.4" fill="#c98be8"/><circle cx="577.80" cy="111.49" r="1.4" fill="#c98be8"/><circle cx="580.25" cy="111.58" r="1.4" fill="#c98be8"/><circle cx="582.70" cy="115.29" r="1.4" fill="#c98be8"/><circle cx="585.15" cy="114.64" r="1.4" fill="#c98be8"/><circle cx="587.60" cy="112.28" r="1.4" fill="#c98be8"/><circle cx="590.05" cy="113.34" r="1.4" fill="#c98be8"/><circle cx="592.50" cy="116.40" r="1.4" fill="#c98be8"/><circle cx="594.95" cy="112.92" r="1.4" fill="#c98be8"/><circle cx="597.40" cy="112.36" r="1.4" fill="#c98be8"/><circle cx="599.85" cy="108.35" r="1.4" fill="#c98be8"/><circle cx="602.30" cy="107.78" r="1.4" fill="#c98be8"/><circle cx="604.75" cy="108.94" r="1.4" fill="#c98be8"/><circle cx="607.20" cy="109.39" r="1.4" fill="#c98be8"/><circle cx="609.65" cy="111.34" r="1.4" fill="#c98be8"/><circle cx="612.10" cy="110.72" r="1.4" fill="#c98be8"/><circle cx="614.55" cy="110.78" r="1.4" fill="#c98be8"/><circle cx="617.00" cy="109.17" r="1.4" fill="#c98be8"/><circle cx="619.45" cy="111.91" r="1.4" fill="#c98be8"/><circle cx="621.90" cy="113.56" r="1.4" fill="#c98be8"/><circle cx="624.35" cy="115.41" r="1.4" fill="#c98be8"/><circle cx="626.80" cy="111.63" r="1.4" fill="#c98be8"/><circle cx="629.25" cy="108.47" r="1.4" fill="#c98be8"/><circle cx="631.70" cy="108.68" r="1.4" fill="#c98be8"/><circle cx="634.15" cy="110.60" r="1.4" fill="#c98be8"/><circle cx="636.60" cy="111.73" r="1.4" fill="#c98be8"/><circle cx="639.05" cy="115.58" r="1.4" fill="#c98be8"/><circle cx="641.50" cy="114.91" r="1.4" fill="#c98be8"/><circle cx="643.95" cy="115.70" r="1.4" fill="#c98be8"/><circle cx="646.40" cy="117.53" r="1.4" fill="#c98be8"/><circle cx="648.85" cy="120.55" r="1.4" fill="#c98be8"/><circle cx="651.30" cy="116.99" r="1.4" fill="#c98be8"/><circle cx="653.75" cy="113.78" r="1.4" fill="#c98be8"/><circle cx="656.20" cy="114.47" r="1.4" fill="#c98be8"/><circle cx="658.65" cy="113.45" r="1.4" fill="#c98be8"/><circle cx="661.10" cy="110.33" r="1.4" fill="#c98be8"/><circle cx="663.55" cy="107.25" r="1.4" fill="#c98be8"/><circle cx="666.00" cy="107.33" r="1.4" fill="#c98be8"/><circle cx="668.45" cy="110.66" r="1.4" fill="#c98be8"/><circle cx="670.90" cy="113.51" r="1.4" fill="#c98be8"/><circle cx="372.00" cy="153.19" r="1.4" fill="#6da6f7"/><circle cx="374.45" cy="151.75" r="1.4" fill="#6da6f7"/><circle cx="376.90" cy="151.34" r="1.4" fill="#6da6f7"/><circle cx="379.35" cy="152.24" r="1.4" fill="#6da6f7"/><circle cx="381.80" cy="155.48" r="1.4" fill="#6da6f7"/><circle cx="384.25" cy="152.72" r="1.4" fill="#6da6f7"/><circle cx="386.70" cy="151.71" r="1.4" fill="#6da6f7"/><circle cx="389.15" cy="153.03" r="1.4" fill="#6da6f7"/><circle cx="391.60" cy="155.88" r="1.4" fill="#6da6f7"/><circle cx="394.05" cy="156.28" r="1.4" fill="#6da6f7"/><circle cx="396.50" cy="153.42" r="1.4" fill="#6da6f7"/><circle cx="398.95" cy="150.88" r="1.4" fill="#6da6f7"/><circle cx="401.40" cy="152.06" r="1.4" fill="#6da6f7"/><circle cx="403.85" cy="153.85" r="1.4" fill="#6da6f7"/><circle cx="406.30" cy="154.96" r="1.4" fill="#6da6f7"/><circle cx="408.75" cy="154.80" r="1.4" fill="#6da6f7"/><circle cx="411.20" cy="155.99" r="1.4" fill="#6da6f7"/><circle cx="413.65" cy="155.32" r="1.4" fill="#6da6f7"/><circle cx="416.10" cy="154.05" r="1.4" fill="#6da6f7"/><circle cx="418.55" cy="153.37" r="1.4" fill="#6da6f7"/><circle cx="421.00" cy="152.48" r="1.4" fill="#6da6f7"/><circle cx="423.45" cy="152.98" r="1.4" fill="#6da6f7"/><circle cx="425.90" cy="151.85" r="1.4" fill="#6da6f7"/><circle cx="428.35" cy="151.33" r="1.4" fill="#6da6f7"/><circle cx="430.80" cy="151.69" r="1.4" fill="#6da6f7"/><circle cx="433.25" cy="153.32" r="1.4" fill="#6da6f7"/><circle cx="435.70" cy="152.84" r="1.4" fill="#6da6f7"/><circle cx="438.15" cy="150.12" r="1.4" fill="#6da6f7"/><circle cx="440.60" cy="152.06" r="1.4" fill="#6da6f7"/><circle cx="443.05" cy="155.74" r="1.4" fill="#6da6f7"/><circle cx="445.50" cy="153.89" r="1.4" fill="#6da6f7"/><circle cx="447.95" cy="156.01" r="1.4" fill="#6da6f7"/><circle cx="450.40" cy="156.43" r="1.4" fill="#6da6f7"/><circle cx="452.85" cy="155.32" r="1.4" fill="#6da6f7"/><circle cx="455.30" cy="156.68" r="1.4" fill="#6da6f7"/><circle cx="457.75" cy="155.98" r="1.4" fill="#6da6f7"/><circle cx="460.20" cy="154.27" r="1.4" fill="#6da6f7"/><circle cx="462.65" cy="153.34" r="1.4" fill="#6da6f7"/><circle cx="465.10" cy="153.94" r="1.4" fill="#6da6f7"/><circle cx="467.55" cy="153.19" r="1.4" fill="#6da6f7"/><circle cx="470.00" cy="155.90" r="1.4" fill="#6da6f7"/><circle cx="472.45" cy="157.65" r="1.4" fill="#6da6f7"/><circle cx="474.90" cy="159.65" r="1.4" fill="#6da6f7"/><circle cx="477.35" cy="154.67" r="1.4" fill="#6da6f7"/><circle cx="479.80" cy="155.99" r="1.4" fill="#6da6f7"/><circle cx="482.25" cy="158.58" r="1.4" fill="#6da6f7"/><circle cx="484.70" cy="161.29" r="1.4" fill="#6da6f7"/><circle cx="487.15" cy="162.32" r="1.4" fill="#6da6f7"/><circle cx="489.60" cy="164.80" r="1.4" fill="#6da6f7"/><circle cx="492.05" cy="164.79" r="1.4" fill="#6da6f7"/><circle cx="494.50" cy="163.36" r="1.4" fill="#6da6f7"/><circle cx="496.95" cy="161.44" r="1.4" fill="#6da6f7"/><circle cx="499.40" cy="160.85" r="1.4" fill="#6da6f7"/><circle cx="501.85" cy="161.33" r="1.4" fill="#6da6f7"/><circle cx="504.30" cy="161.89" r="1.4" fill="#6da6f7"/><circle cx="506.75" cy="155.95" r="1.4" fill="#6da6f7"/><circle cx="509.20" cy="153.70" r="1.4" fill="#6da6f7"/><circle cx="511.65" cy="152.10" r="1.4" fill="#6da6f7"/><circle cx="514.10" cy="150.38" r="1.4" fill="#6da6f7"/><circle cx="516.55" cy="146.66" r="1.4" fill="#6da6f7"/><circle cx="519.00" cy="144.54" r="1.4" fill="#6da6f7"/><circle cx="521.45" cy="146.11" r="1.4" fill="#6da6f7"/><circle cx="523.90" cy="146.48" r="1.4" fill="#6da6f7"/><circle cx="526.35" cy="146.45" r="1.4" fill="#6da6f7"/><circle cx="528.80" cy="147.74" r="1.4" fill="#6da6f7"/><circle cx="531.25" cy="149.39" r="1.4" fill="#6da6f7"/><circle cx="533.70" cy="145.76" r="1.4" fill="#6da6f7"/><circle cx="536.15" cy="144.69" r="1.4" fill="#6da6f7"/><circle cx="538.60" cy="144.76" r="1.4" fill="#6da6f7"/><circle cx="541.05" cy="147.61" r="1.4" fill="#6da6f7"/><circle cx="543.50" cy="151.82" r="1.4" fill="#6da6f7"/><circle cx="545.95" cy="153.49" r="1.4" fill="#6da6f7"/><circle cx="548.40" cy="152.27" r="1.4" fill="#6da6f7"/><circle cx="550.85" cy="153.81" r="1.4" fill="#6da6f7"/><circle cx="553.30" cy="153.82" r="1.4" fill="#6da6f7"/><circle cx="555.75" cy="151.97" r="1.4" fill="#6da6f7"/><circle cx="558.20" cy="151.99" r="1.4" fill="#6da6f7"/><circle cx="560.65" cy="152.79" r="1.4" fill="#6da6f7"/><circle cx="563.10" cy="155.81" r="1.4" fill="#6da6f7"/><circle cx="565.55" cy="156.49" r="1.4" fill="#6da6f7"/><circle cx="568.00" cy="155.74" r="1.4" fill="#6da6f7"/><circle cx="570.45" cy="154.73" r="1.4" fill="#6da6f7"/><circle cx="572.90" cy="152.24" r="1.4" fill="#6da6f7"/><circle cx="575.35" cy="152.93" r="1.4" fill="#6da6f7"/><circle cx="577.80" cy="153.52" r="1.4" fill="#6da6f7"/><circle cx="580.25" cy="154.52" r="1.4" fill="#6da6f7"/><circle cx="582.70" cy="152.93" r="1.4" fill="#6da6f7"/><circle cx="585.15" cy="153.83" r="1.4" fill="#6da6f7"/><circle cx="587.60" cy="153.01" r="1.4" fill="#6da6f7"/><circle cx="590.05" cy="153.88" r="1.4" fill="#6da6f7"/><circle cx="592.50" cy="154.12" r="1.4" fill="#6da6f7"/><circle cx="594.95" cy="154.51" r="1.4" fill="#6da6f7"/><circle cx="597.40" cy="153.83" r="1.4" fill="#6da6f7"/><circle cx="599.85" cy="154.14" r="1.4" fill="#6da6f7"/><circle cx="602.30" cy="153.43" r="1.4" fill="#6da6f7"/><circle cx="604.75" cy="153.95" r="1.4" fill="#6da6f7"/><circle cx="607.20" cy="152.18" r="1.4" fill="#6da6f7"/><circle cx="609.65" cy="151.03" r="1.4" fill="#6da6f7"/><circle cx="612.10" cy="151.20" r="1.4" fill="#6da6f7"/><circle cx="614.55" cy="154.35" r="1.4" fill="#6da6f7"/><circle cx="617.00" cy="152.08" r="1.4" fill="#6da6f7"/><circle cx="619.45" cy="154.04" r="1.4" fill="#6da6f7"/><circle cx="621.90" cy="155.55" r="1.4" fill="#6da6f7"/><circle cx="624.35" cy="154.61" r="1.4" fill="#6da6f7"/><circle cx="626.80" cy="155.05" r="1.4" fill="#6da6f7"/><circle cx="629.25" cy="155.24" r="1.4" fill="#6da6f7"/><circle cx="631.70" cy="154.84" r="1.4" fill="#6da6f7"/><circle cx="634.15" cy="152.57" r="1.4" fill="#6da6f7"/><circle cx="636.60" cy="153.10" r="1.4" fill="#6da6f7"/><circle cx="639.05" cy="154.24" r="1.4" fill="#6da6f7"/><circle cx="641.50" cy="157.08" r="1.4" fill="#6da6f7"/><circle cx="643.95" cy="155.68" r="1.4" fill="#6da6f7"/><circle cx="646.40" cy="156.14" r="1.4" fill="#6da6f7"/><circle cx="648.85" cy="153.93" r="1.4" fill="#6da6f7"/><circle cx="651.30" cy="154.58" r="1.4" fill="#6da6f7"/><circle cx="653.75" cy="155.62" r="1.4" fill="#6da6f7"/><circle cx="656.20" cy="152.75" r="1.4" fill="#6da6f7"/><circle cx="658.65" cy="153.86" r="1.4" fill="#6da6f7"/><circle cx="661.10" cy="153.33" r="1.4" fill="#6da6f7"/><circle cx="663.55" cy="155.53" r="1.4" fill="#6da6f7"/><circle cx="666.00" cy="155.84" r="1.4" fill="#6da6f7"/><circle cx="668.45" cy="155.39" r="1.4" fill="#6da6f7"/><circle cx="670.90" cy="158.48" r="1.4" fill="#6da6f7"/><rect x="364" y="206.0" width="8.4" height="2.7" rx="1.35" fill="#5794f2"/><text x="380.80" y="210.00" font-size="8.1" fill="#d6d6de" font-weight="normal" text-anchor="start" >logins</text><rect x="412" y="206.0" width="8.4" height="2.7" rx="1.35" fill="#b877d9"/><text x="429.00" y="210.00" font-size="8.1" fill="#d6d6de" font-weight="normal" text-anchor="start" >logins (-1 hour)</text><text x="698.80" y="72.70" font-size="9.0" fill="#d6d6de" font-weight="normal" text-anchor="start" stroke="#d6d6de" stroke-width="0.3" textLength="34.7" lengthAdjust="spacingAndGlyphs">Memory</text><path d="M738.72,139.09 A39.3,39.3 0 0 1 798.84,95.41" fill="none" stroke="#73bf69" stroke-width="1.3"/><path d="M798.84,95.41 A39.3,39.3 0 0 1 815.50,124.86" fill="none" stroke="#ee8a2c" stroke-width="1.3"/><path d="M815.50,124.86 A39.3,39.3 0 0 1 813.88,139.09" fill="none" stroke="#e0352e" stroke-width="1.3"/><path d="M745.89,136.90 A31.8,31.8 0 1 1 806.71,136.90" fill="none" stroke="#29292d" stroke-width="10.4"/><path d="M745.89,136.90 A31.8,31.8 0 0 1 762.52,98.94" fill="none" stroke="#70b866" stroke-width="10.4"/><text x="776.30" y="136.20" font-size="13.4" fill="#70b866" font-weight="normal" text-anchor="middle" stroke="#70b866" stroke-width="0.45">114 B</text><text x="869.90" y="72.70" font-size="9.0" fill="#d6d6de" font-weight="normal" text-anchor="start" stroke="#d6d6de" stroke-width="0.3" textLength="47.6" lengthAdjust="spacingAndGlyphs">Google hits</text><path d="M911.33,136.68 A37.4,37.4 0 0 1 968.55,95.11" fill="none" stroke="#73bf69" stroke-width="1.3"/><path d="M968.55,95.11 A37.4,37.4 0 0 1 984.41,123.14" fill="none" stroke="#ee8a2c" stroke-width="1.3"/><path d="M984.41,123.14 A37.4,37.4 0 0 1 982.87,136.68" fill="none" stroke="#e0352e" stroke-width="1.3"/><path d="M918.60,134.46 A29.8,29.8 0 1 1 975.60,134.46" fill="none" stroke="#29292d" stroke-width="10.8"/><path d="M918.60,134.46 A29.8,29.8 0 0 1 919.80,113.79" fill="none" stroke="#70b866" stroke-width="10.8"/><text x="947.10" y="136.40" font-size="15.6" fill="#70b866" font-weight="normal" text-anchor="middle" stroke="#70b866" stroke-width="0.45">57.1</text><text x="699.30" y="167.20" font-size="9.0" fill="#d6d6de" font-weight="normal" text-anchor="start" stroke="#d6d6de" stroke-width="0.3" textLength="55.0" lengthAdjust="spacingAndGlyphs">Support calls</text><path d="M694.00,204.51 L695.05,204.69 L696.60,204.18 L697.57,203.51 L699.20,206.34 L700.10,205.53 L701.80,204.84 L702.62,204.69 L704.40,198.78 L705.14,196.29 L706.83,205.52 L707.00,205.70 L709.35,203.51 L709.60,202.57 L711.87,205.52 L712.20,205.40 L714.40,204.18 L714.80,204.86 L716.92,205.53 L717.40,205.63 L718.61,202.17 L720.00,203.03 L721.13,206.37 L722.60,204.68 L723.65,204.69 L725.20,202.18 L726.18,203.00 L727.80,201.68 L727.86,200.48 L730.38,207.20 L730.40,207.90 L732.91,205.53 L733.00,203.82 L735.43,203.85 L735.60,205.86 L737.96,208.05 L738.20,209.56 L740.48,206.37 L740.80,206.82 L743.00,205.53 L743.40,206.34 L745.53,208.05 L746.00,206.35 L748.05,205.53 L748.60,203.23 L750.58,203.00 L751.20,202.90 L753.10,202.16 L753.80,200.81 L755.62,203.00 L756.40,201.73 L758.15,202.50 L759.00,201.46 L760.67,202.16 L761.60,200.97 L763.20,203.50 L764.20,202.57 L764.88,202.17 L766.56,205.53 L766.80,205.15 L769.08,203.85 L769.40,204.87 L771.61,202.16 L772.00,201.97 L774.13,200.48 L774.60,201.14 L776.66,201.32 L777.20,201.86 L779.18,203.84 L779.80,204.64 L781.70,204.68 L782.40,204.07 L784.23,203.00 L785.00,201.69 L786.75,201.32 L787.60,202.83 L789.28,200.48 L790.20,202.57 L791.80,201.32 L792.80,203.55 L794.32,203.84 L795.40,204.45 L796.85,203.51 L798.00,203.76 L799.37,205.53 L800.60,205.78 L801.90,208.06 L803.20,209.03 L804.42,211.42 L805.80,206.19 L806.94,204.70 L808.40,208.07 L809.47,208.89 L811.00,207.00 L811.99,206.37 L813.60,209.01 L814.52,208.56 L816.20,211.74 L817.04,213.94 L818.72,217.30 L818.80,218.07 L820.41,197.96 L821.40,199.70 L822.09,198.80 L824.00,198.27 L824.61,200.48 L826.60,200.76 L827.14,202.16 L828.82,200.48 L829.20,202.72 L830.50,203.84 L831.80,202.87 L833.03,202.17 L834.40,207.33 L834.71,206.37 L837.00,204.47 L837.23,204.69 L839.60,204.73 L839.76,206.37 L842.20,205.21 L842.28,204.69 L844.80,206.37 L847.33,203.85 L847.40,204.97 L849.85,208.05 L850.00,207.37 L851.53,209.73 L852.60,206.12 L854.06,204.69 L855.20,204.84 L856.58,206.37 L857.80,208.40 L858.00,207.72 L858.00,218.5 L694.00,218.5 Z" fill="#4a2326"/><path d="M694.00,204.51 L695.05,204.69 L696.60,204.18 L697.57,203.51 L699.20,206.34 L700.10,205.53 L701.80,204.84 L702.62,204.69 L704.40,198.78 L705.14,196.29 L706.83,205.52 L707.00,205.70 L709.35,203.51 L709.60,202.57 L711.87,205.52 L712.20,205.40 L714.40,204.18 L714.80,204.86 L716.92,205.53 L717.40,205.63 L718.61,202.17 L720.00,203.03 L721.13,206.37 L722.60,204.68 L723.65,204.69 L725.20,202.18 L726.18,203.00 L727.80,201.68 L727.86,200.48 L730.38,207.20 L730.40,207.90 L732.91,205.53 L733.00,203.82 L735.43,203.85 L735.60,205.86 L737.96,208.05 L738.20,209.56 L740.48,206.37 L740.80,206.82 L743.00,205.53 L743.40,206.34 L745.53,208.05 L746.00,206.35 L748.05,205.53 L748.60,203.23 L750.58,203.00 L751.20,202.90 L753.10,202.16 L753.80,200.81 L755.62,203.00 L756.40,201.73 L758.15,202.50 L759.00,201.46 L760.67,202.16 L761.60,200.97 L763.20,203.50 L764.20,202.57 L764.88,202.17 L766.56,205.53 L766.80,205.15 L769.08,203.85 L769.40,204.87 L771.61,202.16 L772.00,201.97 L774.13,200.48 L774.60,201.14 L776.66,201.32 L777.20,201.86 L779.18,203.84 L779.80,204.64 L781.70,204.68 L782.40,204.07 L784.23,203.00 L785.00,201.69 L786.75,201.32 L787.60,202.83 L789.28,200.48 L790.20,202.57 L791.80,201.32 L792.80,203.55 L794.32,203.84 L795.40,204.45 L796.85,203.51 L798.00,203.76 L799.37,205.53 L800.60,205.78 L801.90,208.06 L803.20,209.03 L804.42,211.42 L805.80,206.19 L806.94,204.70 L808.40,208.07 L809.47,208.89 L811.00,207.00 L811.99,206.37 L813.60,209.01 L814.52,208.56 L816.20,211.74 L817.04,213.94 L818.72,217.30 L818.80,218.07 L820.41,197.96 L821.40,199.70 L822.09,198.80 L824.00,198.27 L824.61,200.48 L826.60,200.76 L827.14,202.16 L828.82,200.48 L829.20,202.72 L830.50,203.84 L831.80,202.87 L833.03,202.17 L834.40,207.33 L834.71,206.37 L837.00,204.47 L837.23,204.69 L839.60,204.73 L839.76,206.37 L842.20,205.21 L842.28,204.69 L844.80,206.37 L847.33,203.85 L847.40,204.97 L849.85,208.05 L850.00,207.37 L851.53,209.73 L852.60,206.12 L854.06,204.69 L855.20,204.84 L856.58,206.37 L857.80,208.40 L858.00,207.72" fill="none" stroke="#e0443f" stroke-width="1"/><text x="776.30" y="200.80" font-size="15.3" fill="#e0443f" font-weight="normal" text-anchor="middle" stroke="#e0443f" stroke-width="0.4">84.9</text><text x="869.80" y="167.20" font-size="9.0" fill="#d6d6de" font-weight="normal" text-anchor="start" stroke="#d6d6de" stroke-width="0.3" textLength="36.0" lengthAdjust="spacingAndGlyphs">Sign ups</text><path d="M865.00,209.64 L865.05,209.73 L867.60,207.75 L868.41,206.37 L870.20,206.52 L871.78,205.53 L872.80,203.99 L875.14,204.69 L875.40,202.75 L876.83,203.51 L878.00,204.00 L879.35,205.53 L880.60,203.88 L881.87,203.85 L883.20,206.29 L884.40,206.37 L885.80,210.14 L886.92,211.92 L888.40,208.54 L889.45,205.53 L891.00,206.77 L891.97,207.21 L893.60,206.16 L894.49,204.69 L896.20,202.84 L897.02,203.84 L898.70,202.16 L898.80,202.11 L901.22,206.36 L901.40,205.27 L903.75,208.05 L904.00,209.40 L906.27,206.87 L906.60,205.50 L908.80,208.55 L909.20,209.14 L911.80,202.82 L912.16,203.85 L914.40,210.49 L914.69,210.57 L917.00,205.36 L918.05,203.85 L919.60,202.26 L922.20,201.76 L922.26,200.48 L924.78,205.52 L924.80,203.78 L927.31,203.85 L927.40,202.36 L929.83,206.37 L930.00,208.09 L932.35,209.73 L932.60,209.36 L934.88,205.53 L935.20,204.38 L937.40,208.05 L937.80,209.51 L940.40,207.41 L940.77,205.53 L943.00,204.69 L944.13,206.37 L945.60,205.36 L947.50,204.69 L948.20,203.61 L950.02,205.53 L950.80,204.59 L952.55,204.68 L953.40,203.70 L955.07,200.48 L956.00,202.06 L956.75,205.52 L958.60,205.00 L959.28,203.85 L961.20,204.15 L961.80,206.37 L963.80,204.52 L964.32,205.53 L966.40,205.63 L967.69,203.85 L969.00,205.23 L970.21,207.21 L971.60,208.77 L972.74,210.57 L974.20,209.46 L976.10,207.21 L976.80,206.78 L979.40,205.15 L979.47,205.53 L981.99,208.05 L982.00,206.37 L984.52,210.58 L984.60,211.59 L987.04,216.46 L987.20,217.91 L988.72,213.95 L989.80,209.91 L991.25,200.47 L992.40,198.76 L992.93,197.11 L995.00,199.36 L995.45,200.47 L997.60,201.42 L997.98,202.17 L1000.20,209.51 L1000.50,209.73 L1002.80,208.06 L1003.03,207.21 L1005.40,206.41 L1006.39,208.05 L1008.00,206.29 L1009.76,206.37 L1010.60,206.30 L1013.12,208.05 L1013.20,208.07 L1015.65,207.21 L1015.80,208.21 L1018.40,205.14 L1019.01,204.69 L1021.00,206.97 L1021.53,209.72 L1023.60,209.86 L1024.90,208.05 L1026.20,207.15 L1028.27,206.37 L1028.80,206.30 L1029.00,205.18 L1029.00,218.5 L865.00,218.5 Z" fill="#21391f"/><path d="M865.00,209.64 L865.05,209.73 L867.60,207.75 L868.41,206.37 L870.20,206.52 L871.78,205.53 L872.80,203.99 L875.14,204.69 L875.40,202.75 L876.83,203.51 L878.00,204.00 L879.35,205.53 L880.60,203.88 L881.87,203.85 L883.20,206.29 L884.40,206.37 L885.80,210.14 L886.92,211.92 L888.40,208.54 L889.45,205.53 L891.00,206.77 L891.97,207.21 L893.60,206.16 L894.49,204.69 L896.20,202.84 L897.02,203.84 L898.70,202.16 L898.80,202.11 L901.22,206.36 L901.40,205.27 L903.75,208.05 L904.00,209.40 L906.27,206.87 L906.60,205.50 L908.80,208.55 L909.20,209.14 L911.80,202.82 L912.16,203.85 L914.40,210.49 L914.69,210.57 L917.00,205.36 L918.05,203.85 L919.60,202.26 L922.20,201.76 L922.26,200.48 L924.78,205.52 L924.80,203.78 L927.31,203.85 L927.40,202.36 L929.83,206.37 L930.00,208.09 L932.35,209.73 L932.60,209.36 L934.88,205.53 L935.20,204.38 L937.40,208.05 L937.80,209.51 L940.40,207.41 L940.77,205.53 L943.00,204.69 L944.13,206.37 L945.60,205.36 L947.50,204.69 L948.20,203.61 L950.02,205.53 L950.80,204.59 L952.55,204.68 L953.40,203.70 L955.07,200.48 L956.00,202.06 L956.75,205.52 L958.60,205.00 L959.28,203.85 L961.20,204.15 L961.80,206.37 L963.80,204.52 L964.32,205.53 L966.40,205.63 L967.69,203.85 L969.00,205.23 L970.21,207.21 L971.60,208.77 L972.74,210.57 L974.20,209.46 L976.10,207.21 L976.80,206.78 L979.40,205.15 L979.47,205.53 L981.99,208.05 L982.00,206.37 L984.52,210.58 L984.60,211.59 L987.04,216.46 L987.20,217.91 L988.72,213.95 L989.80,209.91 L991.25,200.47 L992.40,198.76 L992.93,197.11 L995.00,199.36 L995.45,200.47 L997.60,201.42 L997.98,202.17 L1000.20,209.51 L1000.50,209.73 L1002.80,208.06 L1003.03,207.21 L1005.40,206.41 L1006.39,208.05 L1008.00,206.29 L1009.76,206.37 L1010.60,206.30 L1013.12,208.05 L1013.20,208.07 L1015.65,207.21 L1015.80,208.21 L1018.40,205.14 L1019.01,204.69 L1021.00,206.97 L1021.53,209.72 L1023.60,209.86 L1024.90,208.05 L1026.20,207.15 L1028.27,206.37 L1028.80,206.30 L1029.00,205.18" fill="none" stroke="#44b544" stroke-width="1"/><text x="947.20" y="201.00" font-size="15.3" fill="#44b544" font-weight="normal" text-anchor="middle" stroke="#44b544" stroke-width="0.4">283</text><text x="348.90" y="237.50" font-size="9.0" fill="#d6d6de" font-weight="normal" text-anchor="middle" stroke="#d6d6de" stroke-width="0.3" textLength="64.8" lengthAdjust="spacingAndGlyphs">server requests</text><line x1="34.2" y1="256.00" x2="671.0" y2="256.00" stroke="#27382c" stroke-width="1"/><text x="29.00" y="258.70" font-size="7.4" fill="#cacad4" font-weight="normal" text-anchor="end" >150</text><line x1="34.2" y1="293.90" x2="671.0" y2="293.90" stroke="#27382c" stroke-width="1"/><text x="29.00" y="296.60" font-size="7.4" fill="#cacad4" font-weight="normal" text-anchor="end" >100</text><line x1="34.2" y1="331.80" x2="671.0" y2="331.80" stroke="#27382c" stroke-width="1"/><text x="29.00" y="334.50" font-size="7.4" fill="#cacad4" font-weight="normal" text-anchor="end" >50</text><line x1="34.2" y1="369.70" x2="671.0" y2="369.70" stroke="#27382c" stroke-width="1"/><text x="29.00" y="372.40" font-size="7.4" fill="#cacad4" font-weight="normal" text-anchor="end" >0</text><line x1="34.20" y1="256.0" x2="34.20" y2="369.7" stroke="#27382c" stroke-width="1"/><text x="34.20" y="381.20" font-size="7.7" fill="#cacad4" font-weight="normal" text-anchor="middle" >16:50</text><line x1="87.50" y1="256.0" x2="87.50" y2="369.7" stroke="#27382c" stroke-width="1"/><text x="87.50" y="381.20" font-size="7.7" fill="#cacad4" font-weight="normal" text-anchor="middle" >16:55</text><line x1="140.80" y1="256.0" x2="140.80" y2="369.7" stroke="#27382c" stroke-width="1"/><text x="140.80" y="381.20" font-size="7.7" fill="#cacad4" font-weight="normal" text-anchor="middle" >17:00</text><line x1="194.10" y1="256.0" x2="194.10" y2="369.7" stroke="#27382c" stroke-width="1"/><text x="194.10" y="381.20" font-size="7.7" fill="#cacad4" font-weight="normal" text-anchor="middle" >17:05</text><line x1="247.40" y1="256.0" x2="247.40" y2="369.7" stroke="#27382c" stroke-width="1"/><text x="247.40" y="381.20" font-size="7.7" fill="#cacad4" font-weight="normal" text-anchor="middle" >17:10</text><line x1="300.70" y1="256.0" x2="300.70" y2="369.7" stroke="#27382c" stroke-width="1"/><text x="300.70" y="381.20" font-size="7.7" fill="#cacad4" font-weight="normal" text-anchor="middle" >17:15</text><line x1="354.00" y1="256.0" x2="354.00" y2="369.7" stroke="#27382c" stroke-width="1"/><text x="354.00" y="381.20" font-size="7.7" fill="#cacad4" font-weight="normal" text-anchor="middle" >17:20</text><line x1="407.30" y1="256.0" x2="407.30" y2="369.7" stroke="#27382c" stroke-width="1"/><text x="407.30" y="381.20" font-size="7.7" fill="#cacad4" font-weight="normal" text-anchor="middle" >17:25</text><line x1="460.60" y1="256.0" x2="460.60" y2="369.7" stroke="#27382c" stroke-width="1"/><text x="460.60" y="381.20" font-size="7.7" fill="#cacad4" font-weight="normal" text-anchor="middle" >17:30</text><line x1="513.90" y1="256.0" x2="513.90" y2="369.7" stroke="#27382c" stroke-width="1"/><text x="513.90" y="381.20" font-size="7.7" fill="#cacad4" font-weight="normal" text-anchor="middle" >17:35</text><line x1="567.20" y1="256.0" x2="567.20" y2="369.7" stroke="#27382c" stroke-width="1"/><text x="567.20" y="381.20" font-size="7.7" fill="#cacad4" font-weight="normal" text-anchor="middle" >17:40</text><line x1="620.50" y1="256.0" x2="620.50" y2="369.7" stroke="#27382c" stroke-width="1"/><text x="620.50" y="381.20" font-size="7.7" fill="#cacad4" font-weight="normal" text-anchor="middle" >17:45</text><path d="M32.60,347.99 L34.60,347.29 L36.60,347.91 L38.60,348.61 L40.60,348.00 L42.60,347.18 L44.60,346.82 L46.60,347.32 L48.60,347.94 L50.60,348.95 L52.60,348.92 L54.60,347.86 L56.60,347.14 L58.60,346.80 L60.60,347.93 L62.60,347.98 L64.60,346.16 L66.60,346.14 L68.60,346.32 L70.60,347.02 L72.60,348.32 L74.60,349.16 L76.60,348.29 L78.60,347.37 L80.60,346.36 L82.60,347.28 L84.60,348.73 L86.60,348.96 L88.60,349.00 L90.60,348.89 L92.60,348.46 L94.60,348.04 L96.60,347.99 L98.60,348.17 L100.60,348.38 L102.60,348.65 L104.60,348.20 L106.60,346.57 L108.60,346.60 L110.60,346.65 L112.60,346.07 L114.60,345.37 L116.60,345.43 L118.60,346.37 L120.60,346.99 L122.60,347.28 L124.60,347.69 L126.60,348.35 L128.60,349.01 L130.60,347.89 L132.60,346.70 L134.60,346.40 L136.60,346.39 L138.60,347.06 L140.60,347.74 L142.60,347.99 L144.60,347.91 L146.60,347.24 L148.60,346.27 L150.60,347.24 L152.60,348.98 L154.60,348.14 L156.60,347.03 L158.60,347.30 L160.60,347.58 L162.60,347.69 L164.60,347.60 L166.60,347.71 L168.60,348.18 L170.60,348.65 L172.60,348.21 L174.60,347.69 L176.60,347.91 L178.60,348.48 L180.60,348.69 L182.60,348.33 L184.60,348.25 L186.60,348.25 L188.60,348.26 L190.60,348.32 L192.60,348.38 L194.60,348.84 L196.60,348.96 L198.60,347.98 L200.60,347.00 L202.60,346.88 L204.60,347.05 L206.60,346.82 L208.60,346.50 L210.60,346.62 L212.60,347.25 L214.60,347.87 L216.60,347.54 L218.60,346.84 L220.60,346.15 L222.60,346.22 L224.60,346.35 L226.60,346.99 L228.60,347.84 L230.60,347.52 L232.60,346.52 L234.60,347.93 L236.60,348.97 L238.60,348.00 L240.60,347.03 L242.60,346.69 L244.60,346.58 L246.60,347.44 L248.60,348.51 L250.60,348.19 L252.60,348.28 L254.60,349.02 L256.60,348.08 L258.60,346.54 L260.60,346.49 L262.60,346.68 L264.60,346.93 L266.60,347.76 L268.60,348.58 L270.60,348.23 L272.60,347.88 L274.60,347.82 L276.60,348.54 L278.60,349.26 L280.60,347.94 L282.60,346.53 L284.60,346.47 L286.60,346.41 L288.60,346.84 L290.60,347.55 L292.60,347.71 L294.60,347.04 L296.60,346.61 L298.60,347.21 L300.60,347.44 L302.60,346.98 L304.60,346.90 L306.60,347.20 L308.60,348.05 L310.60,348.89 L312.60,348.97 L314.60,348.00 L316.60,347.23 L318.60,347.31 L320.60,347.39 L322.60,347.63 L324.60,347.99 L326.60,347.52 L328.60,346.88 L330.60,346.47 L332.60,348.25 L334.60,349.21 L336.60,349.37 L338.60,349.18 L340.60,348.98 L342.60,348.32 L344.60,347.63 L346.60,347.26 L348.60,347.52 L350.60,347.65 L352.60,347.73 L354.60,348.34 L356.60,348.79 L358.60,348.35 L360.60,348.01 L362.60,347.76 L364.60,347.49 L366.60,347.11 L368.60,346.93 L370.60,346.84 L372.60,346.82 L374.60,347.89 L376.60,348.95 L378.60,349.38 L380.60,349.29 L382.60,349.16 L384.60,349.00 L386.60,348.85 L388.60,348.73 L390.60,348.62 L392.60,348.52 L394.60,348.43 L396.60,348.32 L398.60,348.14 L400.60,347.33 L402.60,346.35 L404.60,347.06 L406.60,347.60 L408.60,346.88 L410.60,346.17 L412.60,346.93 L414.60,347.27 L416.60,347.05 L418.60,347.08 L420.60,347.62 L422.60,348.16 L424.60,348.20 L426.60,347.88 L428.60,347.78 L430.60,348.51 L432.60,349.22 L434.60,347.96 L436.60,346.71 L438.60,346.63 L440.60,347.84 L442.60,348.50 L444.60,348.77 L446.60,349.03 L448.60,349.15 L450.60,348.94 L452.60,348.00 L454.60,347.05 L456.60,346.99 L458.60,347.23 L460.60,347.25 L462.60,347.28 L464.60,347.50 L466.60,347.71 L468.60,347.92 L470.60,348.29 L472.60,349.01 L474.60,349.08 L476.60,348.74 L478.60,348.10 L480.60,347.27 L482.60,346.72 L484.60,347.25 L486.60,347.77 L488.60,347.99 L490.60,348.09 L492.60,347.68 L494.60,347.26 L496.60,347.94 L498.60,348.64 L500.60,349.00 L502.60,348.32 L504.60,347.65 L506.60,347.07 L508.60,346.49 L510.60,346.64 L512.60,347.01 L514.60,347.26 L516.60,347.20 L518.60,347.14 L520.60,347.10 L522.60,347.06 L524.60,347.16 L526.60,347.84 L528.60,348.67 L530.60,349.16 L532.60,349.53 L534.60,349.81 L536.60,349.75 L538.60,349.85 L540.60,350.36 L542.60,350.92 L544.60,351.40 L546.60,352.56 L548.60,352.36 L550.60,351.34 L552.60,349.32 L554.60,347.57 L556.60,346.74 L558.60,345.47 L560.60,344.76 L562.60,344.63 L564.60,344.96 L566.60,345.26 L568.60,345.04 L570.60,344.81 L572.60,344.71 L574.60,344.94 L576.60,344.94 L578.60,344.78 L580.60,344.62 L582.60,344.76 L584.60,345.28 L586.60,347.19 L588.60,347.36 L590.60,347.42 L592.60,348.05 L594.60,348.49 L596.60,348.78 L598.60,348.67 L600.60,348.55 L602.60,347.88 L604.60,346.68 L606.60,346.68 L608.60,347.54 L610.60,348.07 L612.60,348.31 L614.60,348.42 L616.60,348.20 L618.60,348.36 L620.60,348.74 L622.60,348.97 L624.60,349.16 L626.60,349.22 L628.60,347.98 L630.60,346.74 L632.60,346.95 L634.60,348.29 L636.60,349.39 L638.60,349.36 L640.60,349.25 L642.60,348.22 L644.60,347.20 L646.60,348.16 L648.60,349.42 L650.60,349.28 L652.60,349.14 L654.60,348.50 L656.60,347.89 L658.60,348.00 L660.60,348.11 L662.60,347.76 L664.60,346.84 L666.60,347.01 L668.60,347.36 L670.60,347.86 L670.60,369.70 L668.60,369.70 L666.60,369.70 L664.60,369.70 L662.60,369.70 L660.60,369.70 L658.60,369.70 L656.60,369.70 L654.60,369.70 L652.60,369.70 L650.60,369.70 L648.60,369.70 L646.60,369.70 L644.60,369.70 L642.60,369.70 L640.60,369.70 L638.60,369.70 L636.60,369.70 L634.60,369.70 L632.60,369.70 L630.60,369.70 L628.60,369.70 L626.60,369.70 L624.60,369.70 L622.60,369.70 L620.60,369.70 L618.60,369.70 L616.60,369.70 L614.60,369.70 L612.60,369.70 L610.60,369.70 L608.60,369.70 L606.60,369.70 L604.60,369.70 L602.60,369.70 L600.60,369.70 L598.60,369.70 L596.60,369.70 L594.60,369.70 L592.60,369.70 L590.60,369.70 L588.60,369.70 L586.60,369.70 L584.60,369.70 L582.60,369.70 L580.60,369.70 L578.60,369.70 L576.60,369.70 L574.60,369.70 L572.60,369.70 L570.60,369.70 L568.60,369.70 L566.60,369.70 L564.60,369.70 L562.60,369.70 L560.60,369.70 L558.60,369.70 L556.60,369.70 L554.60,369.70 L552.60,369.70 L550.60,369.70 L548.60,369.70 L546.60,369.70 L544.60,369.70 L542.60,369.70 L540.60,369.70 L538.60,369.70 L536.60,369.70 L534.60,369.70 L532.60,369.70 L530.60,369.70 L528.60,369.70 L526.60,369.70 L524.60,369.70 L522.60,369.70 L520.60,369.70 L518.60,369.70 L516.60,369.70 L514.60,369.70 L512.60,369.70 L510.60,369.70 L508.60,369.70 L506.60,369.70 L504.60,369.70 L502.60,369.70 L500.60,369.70 L498.60,369.70 L496.60,369.70 L494.60,369.70 L492.60,369.70 L490.60,369.70 L488.60,369.70 L486.60,369.70 L484.60,369.70 L482.60,369.70 L480.60,369.70 L478.60,369.70 L476.60,369.70 L474.60,369.70 L472.60,369.70 L470.60,369.70 L468.60,369.70 L466.60,369.70 L464.60,369.70 L462.60,369.70 L460.60,369.70 L458.60,369.70 L456.60,369.70 L454.60,369.70 L452.60,369.70 L450.60,369.70 L448.60,369.70 L446.60,369.70 L444.60,369.70 L442.60,369.70 L440.60,369.70 L438.60,369.70 L436.60,369.70 L434.60,369.70 L432.60,369.70 L430.60,369.70 L428.60,369.70 L426.60,369.70 L424.60,369.70 L422.60,369.70 L420.60,369.70 L418.60,369.70 L416.60,369.70 L414.60,369.70 L412.60,369.70 L410.60,369.70 L408.60,369.70 L406.60,369.70 L404.60,369.70 L402.60,369.70 L400.60,369.70 L398.60,369.70 L396.60,369.70 L394.60,369.70 L392.60,369.70 L390.60,369.70 L388.60,369.70 L386.60,369.70 L384.60,369.70 L382.60,369.70 L380.60,369.70 L378.60,369.70 L376.60,369.70 L374.60,369.70 L372.60,369.70 L370.60,369.70 L368.60,369.70 L366.60,369.70 L364.60,369.70 L362.60,369.70 L360.60,369.70 L358.60,369.70 L356.60,369.70 L354.60,369.70 L352.60,369.70 L350.60,369.70 L348.60,369.70 L346.60,369.70 L344.60,369.70 L342.60,369.70 L340.60,369.70 L338.60,369.70 L336.60,369.70 L334.60,369.70 L332.60,369.70 L330.60,369.70 L328.60,369.70 L326.60,369.70 L324.60,369.70 L322.60,369.70 L320.60,369.70 L318.60,369.70 L316.60,369.70 L314.60,369.70 L312.60,369.70 L310.60,369.70 L308.60,369.70 L306.60,369.70 L304.60,369.70 L302.60,369.70 L300.60,369.70 L298.60,369.70 L296.60,369.70 L294.60,369.70 L292.60,369.70 L290.60,369.70 L288.60,369.70 L286.60,369.70 L284.60,369.70 L282.60,369.70 L280.60,369.70 L278.60,369.70 L276.60,369.70 L274.60,369.70 L272.60,369.70 L270.60,369.70 L268.60,369.70 L266.60,369.70 L264.60,369.70 L262.60,369.70 L260.60,369.70 L258.60,369.70 L256.60,369.70 L254.60,369.70 L252.60,369.70 L250.60,369.70 L248.60,369.70 L246.60,369.70 L244.60,369.70 L242.60,369.70 L240.60,369.70 L238.60,369.70 L236.60,369.70 L234.60,369.70 L232.60,369.70 L230.60,369.70 L228.60,369.70 L226.60,369.70 L224.60,369.70 L222.60,369.70 L220.60,369.70 L218.60,369.70 L216.60,369.70 L214.60,369.70 L212.60,369.70 L210.60,369.70 L208.60,369.70 L206.60,369.70 L204.60,369.70 L202.60,369.70 L200.60,369.70 L198.60,369.70 L196.60,369.70 L194.60,369.70 L192.60,369.70 L190.60,369.70 L188.60,369.70 L186.60,369.70 L184.60,369.70 L182.60,369.70 L180.60,369.70 L178.60,369.70 L176.60,369.70 L174.60,369.70 L172.60,369.70 L170.60,369.70 L168.60,369.70 L166.60,369.70 L164.60,369.70 L162.60,369.70 L160.60,369.70 L158.60,369.70 L156.60,369.70 L154.60,369.70 L152.60,369.70 L150.60,369.70 L148.60,369.70 L146.60,369.70 L144.60,369.70 L142.60,369.70 L140.60,369.70 L138.60,369.70 L136.60,369.70 L134.60,369.70 L132.60,369.70 L130.60,369.70 L128.60,369.70 L126.60,369.70 L124.60,369.70 L122.60,369.70 L120.60,369.70 L118.60,369.70 L116.60,369.70 L114.60,369.70 L112.60,369.70 L110.60,369.70 L108.60,369.70 L106.60,369.70 L104.60,369.70 L102.60,369.70 L100.60,369.70 L98.60,369.70 L96.60,369.70 L94.60,369.70 L92.60,369.70 L90.60,369.70 L88.60,369.70 L86.60,369.70 L84.60,369.70 L82.60,369.70 L80.60,369.70 L78.60,369.70 L76.60,369.70 L74.60,369.70 L72.60,369.70 L70.60,369.70 L68.60,369.70 L66.60,369.70 L64.60,369.70 L62.60,369.70 L60.60,369.70 L58.60,369.70 L56.60,369.70 L54.60,369.70 L52.60,369.70 L50.60,369.70 L48.60,369.70 L46.60,369.70 L44.60,369.70 L42.60,369.70 L40.60,369.70 L38.60,369.70 L36.60,369.70 L34.60,369.70 L32.60,369.70 Z" fill="#92a4ae"/><path d="M32.60,347.99 L34.60,347.29 L36.60,347.91 L38.60,348.61 L40.60,348.00 L42.60,347.18 L44.60,346.82 L46.60,347.32 L48.60,347.94 L50.60,348.95 L52.60,348.92 L54.60,347.86 L56.60,347.14 L58.60,346.80 L60.60,347.93 L62.60,347.98 L64.60,346.16 L66.60,346.14 L68.60,346.32 L70.60,347.02 L72.60,348.32 L74.60,349.16 L76.60,348.29 L78.60,347.37 L80.60,346.36 L82.60,347.28 L84.60,348.73 L86.60,348.96 L88.60,349.00 L90.60,348.89 L92.60,348.46 L94.60,348.04 L96.60,347.99 L98.60,348.17 L100.60,348.38 L102.60,348.65 L104.60,348.20 L106.60,346.57 L108.60,346.60 L110.60,346.65 L112.60,346.07 L114.60,345.37 L116.60,345.43 L118.60,346.37 L120.60,346.99 L122.60,347.28 L124.60,347.69 L126.60,348.35 L128.60,349.01 L130.60,347.89 L132.60,346.70 L134.60,346.40 L136.60,346.39 L138.60,347.06 L140.60,347.74 L142.60,347.99 L144.60,347.91 L146.60,347.24 L148.60,346.27 L150.60,347.24 L152.60,348.98 L154.60,348.14 L156.60,347.03 L158.60,347.30 L160.60,347.58 L162.60,347.69 L164.60,347.60 L166.60,347.71 L168.60,348.18 L170.60,348.65 L172.60,348.21 L174.60,347.69 L176.60,347.91 L178.60,348.48 L180.60,348.69 L182.60,348.33 L184.60,348.25 L186.60,348.25 L188.60,348.26 L190.60,348.32 L192.60,348.38 L194.60,348.84 L196.60,348.96 L198.60,347.98 L200.60,347.00 L202.60,346.88 L204.60,347.05 L206.60,346.82 L208.60,346.50 L210.60,346.62 L212.60,347.25 L214.60,347.87 L216.60,347.54 L218.60,346.84 L220.60,346.15 L222.60,346.22 L224.60,346.35 L226.60,346.99 L228.60,347.84 L230.60,347.52 L232.60,346.52 L234.60,347.93 L236.60,348.97 L238.60,348.00 L240.60,347.03 L242.60,346.69 L244.60,346.58 L246.60,347.44 L248.60,348.51 L250.60,348.19 L252.60,348.28 L254.60,349.02 L256.60,348.08 L258.60,346.54 L260.60,346.49 L262.60,346.68 L264.60,346.93 L266.60,347.76 L268.60,348.58 L270.60,348.23 L272.60,347.88 L274.60,347.82 L276.60,348.54 L278.60,349.26 L280.60,347.94 L282.60,346.53 L284.60,346.47 L286.60,346.41 L288.60,346.84 L290.60,347.55 L292.60,347.71 L294.60,347.04 L296.60,346.61 L298.60,347.21 L300.60,347.44 L302.60,346.98 L304.60,346.90 L306.60,347.20 L308.60,348.05 L310.60,348.89 L312.60,348.97 L314.60,348.00 L316.60,347.23 L318.60,347.31 L320.60,347.39 L322.60,347.63 L324.60,347.99 L326.60,347.52 L328.60,346.88 L330.60,346.47 L332.60,348.25 L334.60,349.21 L336.60,349.37 L338.60,349.18 L340.60,348.98 L342.60,348.32 L344.60,347.63 L346.60,347.26 L348.60,347.52 L350.60,347.65 L352.60,347.73 L354.60,348.34 L356.60,348.79 L358.60,348.35 L360.60,348.01 L362.60,347.76 L364.60,347.49 L366.60,347.11 L368.60,346.93 L370.60,346.84 L372.60,346.82 L374.60,347.89 L376.60,348.95 L378.60,349.38 L380.60,349.29 L382.60,349.16 L384.60,349.00 L386.60,348.85 L388.60,348.73 L390.60,348.62 L392.60,348.52 L394.60,348.43 L396.60,348.32 L398.60,348.14 L400.60,347.33 L402.60,346.35 L404.60,347.06 L406.60,347.60 L408.60,346.88 L410.60,346.17 L412.60,346.93 L414.60,347.27 L416.60,347.05 L418.60,347.08 L420.60,347.62 L422.60,348.16 L424.60,348.20 L426.60,347.88 L428.60,347.78 L430.60,348.51 L432.60,349.22 L434.60,347.96 L436.60,346.71 L438.60,346.63 L440.60,347.84 L442.60,348.50 L444.60,348.77 L446.60,349.03 L448.60,349.15 L450.60,348.94 L452.60,348.00 L454.60,347.05 L456.60,346.99 L458.60,347.23 L460.60,347.25 L462.60,347.28 L464.60,347.50 L466.60,347.71 L468.60,347.92 L470.60,348.29 L472.60,349.01 L474.60,349.08 L476.60,348.74 L478.60,348.10 L480.60,347.27 L482.60,346.72 L484.60,347.25 L486.60,347.77 L488.60,347.99 L490.60,348.09 L492.60,347.68 L494.60,347.26 L496.60,347.94 L498.60,348.64 L500.60,349.00 L502.60,348.32 L504.60,347.65 L506.60,347.07 L508.60,346.49 L510.60,346.64 L512.60,347.01 L514.60,347.26 L516.60,347.20 L518.60,347.14 L520.60,347.10 L522.60,347.06 L524.60,347.16 L526.60,347.84 L528.60,348.67 L530.60,349.16 L532.60,349.53 L534.60,349.81 L536.60,349.75 L538.60,349.85 L540.60,350.36 L542.60,350.92 L544.60,351.40 L546.60,352.56 L548.60,352.36 L550.60,351.34 L552.60,349.32 L554.60,347.57 L556.60,346.74 L558.60,345.47 L560.60,344.76 L562.60,344.63 L564.60,344.96 L566.60,345.26 L568.60,345.04 L570.60,344.81 L572.60,344.71 L574.60,344.94 L576.60,344.94 L578.60,344.78 L580.60,344.62 L582.60,344.76 L584.60,345.28 L586.60,347.19 L588.60,347.36 L590.60,347.42 L592.60,348.05 L594.60,348.49 L596.60,348.78 L598.60,348.67 L600.60,348.55 L602.60,347.88 L604.60,346.68 L606.60,346.68 L608.60,347.54 L610.60,348.07 L612.60,348.31 L614.60,348.42 L616.60,348.20 L618.60,348.36 L620.60,348.74 L622.60,348.97 L624.60,349.16 L626.60,349.22 L628.60,347.98 L630.60,346.74 L632.60,346.95 L634.60,348.29 L636.60,349.39 L638.60,349.36 L640.60,349.25 L642.60,348.22 L644.60,347.20 L646.60,348.16 L648.60,349.42 L650.60,349.28 L652.60,349.14 L654.60,348.50 L656.60,347.89 L658.60,348.00 L660.60,348.11 L662.60,347.76 L664.60,346.84 L666.60,347.01 L668.60,347.36 L670.60,347.86" fill="none" stroke="#b4c6d0" stroke-width="0.9"/><path d="M32.60,323.78 L34.60,322.86 L36.60,324.61 L38.60,326.98 L40.60,327.89 L42.60,326.93 L44.60,326.44 L46.60,325.86 L48.60,325.27 L50.60,325.54 L52.60,326.61 L54.60,326.65 L56.60,324.68 L58.60,322.94 L60.60,324.49 L62.60,324.96 L64.60,322.71 L66.60,322.27 L68.60,323.73 L70.60,325.70 L72.60,326.92 L74.60,327.47 L76.60,325.34 L78.60,323.16 L80.60,324.44 L82.60,326.37 L84.60,326.42 L86.60,326.00 L88.60,327.23 L90.60,328.04 L92.60,328.06 L94.60,326.14 L96.60,324.73 L98.60,326.01 L100.60,327.32 L102.60,326.08 L104.60,323.89 L106.60,323.44 L108.60,324.58 L110.60,323.95 L112.60,322.33 L114.60,321.12 L116.60,322.19 L118.60,325.00 L120.60,326.10 L122.60,326.24 L124.60,326.19 L126.60,326.30 L128.60,326.34 L130.60,324.74 L132.60,323.31 L134.60,323.87 L136.60,325.13 L138.60,325.50 L140.60,324.97 L142.60,324.08 L144.60,324.23 L146.60,323.79 L148.60,322.85 L150.60,323.55 L152.60,325.50 L154.60,325.10 L156.60,324.42 L158.60,323.90 L160.60,323.39 L162.60,323.00 L164.60,322.98 L166.60,323.24 L168.60,323.97 L170.60,324.70 L172.60,325.38 L174.60,325.83 L176.60,325.50 L178.60,325.53 L180.60,325.65 L182.60,325.22 L184.60,324.64 L186.60,323.79 L188.60,323.83 L190.60,324.01 L192.60,323.84 L194.60,324.03 L196.60,324.64 L198.60,324.16 L200.60,323.04 L202.60,322.70 L204.60,323.71 L206.60,325.51 L208.60,325.95 L210.60,325.84 L212.60,325.52 L214.60,324.71 L216.60,324.33 L218.60,325.38 L220.60,324.98 L222.60,324.24 L224.60,325.24 L226.60,326.75 L228.60,327.36 L230.60,326.66 L232.60,324.26 L234.60,323.42 L236.60,324.53 L238.60,323.63 L240.60,324.20 L242.60,325.63 L244.60,325.34 L246.60,325.36 L248.60,325.70 L250.60,324.65 L252.60,324.70 L254.60,325.68 L256.60,325.08 L258.60,324.14 L260.60,324.32 L262.60,324.36 L264.60,324.47 L266.60,325.17 L268.60,326.92 L270.60,327.77 L272.60,326.90 L274.60,325.79 L276.60,325.62 L278.60,326.05 L280.60,324.45 L282.60,322.59 L284.60,322.02 L286.60,321.98 L288.60,323.92 L290.60,325.31 L292.60,324.54 L294.60,323.99 L296.60,323.75 L298.60,324.88 L300.60,325.76 L302.60,325.96 L304.60,324.53 L306.60,323.73 L308.60,325.05 L310.60,326.38 L312.60,326.87 L314.60,326.15 L316.60,325.13 L318.60,324.97 L320.60,325.12 L322.60,325.63 L324.60,325.83 L326.60,324.91 L328.60,323.80 L330.60,322.84 L332.60,324.08 L334.60,325.91 L336.60,327.04 L338.60,326.80 L340.60,325.48 L342.60,324.31 L344.60,323.34 L346.60,322.80 L348.60,323.29 L350.60,324.29 L352.60,325.79 L354.60,327.82 L356.60,327.08 L358.60,325.22 L360.60,324.29 L362.60,323.90 L364.60,324.04 L366.60,324.64 L368.60,325.70 L370.60,325.07 L372.60,324.50 L374.60,326.14 L376.60,327.77 L378.60,328.12 L380.60,327.79 L382.60,327.49 L384.60,327.27 L386.60,327.13 L388.60,327.68 L390.60,327.11 L392.60,325.19 L394.60,326.41 L396.60,327.70 L398.60,326.56 L400.60,324.77 L402.60,323.08 L404.60,323.55 L406.60,324.64 L408.60,324.53 L410.60,323.17 L412.60,322.74 L414.60,323.08 L416.60,323.68 L418.60,324.37 L420.60,325.48 L422.60,325.99 L424.60,325.03 L426.60,324.52 L428.60,325.05 L430.60,326.40 L432.60,327.63 L434.60,326.90 L436.60,326.04 L438.60,326.36 L440.60,327.20 L442.60,326.95 L444.60,326.44 L446.60,326.33 L448.60,326.92 L450.60,327.80 L452.60,327.50 L454.60,326.38 L456.60,326.09 L458.60,326.02 L460.60,325.73 L462.60,325.90 L464.60,326.41 L466.60,326.74 L468.60,326.45 L470.60,325.50 L472.60,326.58 L474.60,327.41 L476.60,327.44 L478.60,325.82 L480.60,324.93 L482.60,324.79 L484.60,325.71 L486.60,326.63 L488.60,326.55 L490.60,325.97 L492.60,325.30 L494.60,325.83 L496.60,326.99 L498.60,328.00 L500.60,327.83 L502.60,325.76 L504.60,324.93 L506.60,324.46 L508.60,324.25 L510.60,325.46 L512.60,326.89 L514.60,326.43 L516.60,325.64 L518.60,325.51 L520.60,325.39 L522.60,325.59 L524.60,326.32 L526.60,327.62 L528.60,326.79 L530.60,325.87 L532.60,327.00 L534.60,328.46 L536.60,329.04 L538.60,328.90 L540.60,329.82 L542.60,331.16 L544.60,332.51 L546.60,333.63 L548.60,333.93 L550.60,333.29 L552.60,329.36 L554.60,324.60 L556.60,322.32 L558.60,320.72 L560.60,319.64 L562.60,319.71 L564.60,320.22 L566.60,320.53 L568.60,320.25 L570.60,319.47 L572.60,319.01 L574.60,319.62 L576.60,319.99 L578.60,319.96 L580.60,319.83 L582.60,320.08 L584.60,321.81 L586.60,324.14 L588.60,324.17 L590.60,324.10 L592.60,325.16 L594.60,325.95 L596.60,326.19 L598.60,325.67 L600.60,325.64 L602.60,325.14 L604.60,324.71 L606.60,325.62 L608.60,326.34 L610.60,326.62 L612.60,327.07 L614.60,327.49 L616.60,326.88 L618.60,326.60 L620.60,326.98 L622.60,328.34 L624.60,327.59 L626.60,325.25 L628.60,324.23 L630.60,323.50 L632.60,323.75 L634.60,325.06 L636.60,325.96 L638.60,325.99 L640.60,326.70 L642.60,326.32 L644.60,324.70 L646.60,325.21 L648.60,326.28 L650.60,325.96 L652.60,326.43 L654.60,326.64 L656.60,325.62 L658.60,324.78 L660.60,324.02 L662.60,324.18 L664.60,323.54 L666.60,323.71 L668.60,324.07 L670.60,324.22 L670.60,347.86 L668.60,347.36 L666.60,347.01 L664.60,346.84 L662.60,347.76 L660.60,348.11 L658.60,348.00 L656.60,347.89 L654.60,348.50 L652.60,349.14 L650.60,349.28 L648.60,349.42 L646.60,348.16 L644.60,347.20 L642.60,348.22 L640.60,349.25 L638.60,349.36 L636.60,349.39 L634.60,348.29 L632.60,346.95 L630.60,346.74 L628.60,347.98 L626.60,349.22 L624.60,349.16 L622.60,348.97 L620.60,348.74 L618.60,348.36 L616.60,348.20 L614.60,348.42 L612.60,348.31 L610.60,348.07 L608.60,347.54 L606.60,346.68 L604.60,346.68 L602.60,347.88 L600.60,348.55 L598.60,348.67 L596.60,348.78 L594.60,348.49 L592.60,348.05 L590.60,347.42 L588.60,347.36 L586.60,347.19 L584.60,345.28 L582.60,344.76 L580.60,344.62 L578.60,344.78 L576.60,344.94 L574.60,344.94 L572.60,344.71 L570.60,344.81 L568.60,345.04 L566.60,345.26 L564.60,344.96 L562.60,344.63 L560.60,344.76 L558.60,345.47 L556.60,346.74 L554.60,347.57 L552.60,349.32 L550.60,351.34 L548.60,352.36 L546.60,352.56 L544.60,351.40 L542.60,350.92 L540.60,350.36 L538.60,349.85 L536.60,349.75 L534.60,349.81 L532.60,349.53 L530.60,349.16 L528.60,348.67 L526.60,347.84 L524.60,347.16 L522.60,347.06 L520.60,347.10 L518.60,347.14 L516.60,347.20 L514.60,347.26 L512.60,347.01 L510.60,346.64 L508.60,346.49 L506.60,347.07 L504.60,347.65 L502.60,348.32 L500.60,349.00 L498.60,348.64 L496.60,347.94 L494.60,347.26 L492.60,347.68 L490.60,348.09 L488.60,347.99 L486.60,347.77 L484.60,347.25 L482.60,346.72 L480.60,347.27 L478.60,348.10 L476.60,348.74 L474.60,349.08 L472.60,349.01 L470.60,348.29 L468.60,347.92 L466.60,347.71 L464.60,347.50 L462.60,347.28 L460.60,347.25 L458.60,347.23 L456.60,346.99 L454.60,347.05 L452.60,348.00 L450.60,348.94 L448.60,349.15 L446.60,349.03 L444.60,348.77 L442.60,348.50 L440.60,347.84 L438.60,346.63 L436.60,346.71 L434.60,347.96 L432.60,349.22 L430.60,348.51 L428.60,347.78 L426.60,347.88 L424.60,348.20 L422.60,348.16 L420.60,347.62 L418.60,347.08 L416.60,347.05 L414.60,347.27 L412.60,346.93 L410.60,346.17 L408.60,346.88 L406.60,347.60 L404.60,347.06 L402.60,346.35 L400.60,347.33 L398.60,348.14 L396.60,348.32 L394.60,348.43 L392.60,348.52 L390.60,348.62 L388.60,348.73 L386.60,348.85 L384.60,349.00 L382.60,349.16 L380.60,349.29 L378.60,349.38 L376.60,348.95 L374.60,347.89 L372.60,346.82 L370.60,346.84 L368.60,346.93 L366.60,347.11 L364.60,347.49 L362.60,347.76 L360.60,348.01 L358.60,348.35 L356.60,348.79 L354.60,348.34 L352.60,347.73 L350.60,347.65 L348.60,347.52 L346.60,347.26 L344.60,347.63 L342.60,348.32 L340.60,348.98 L338.60,349.18 L336.60,349.37 L334.60,349.21 L332.60,348.25 L330.60,346.47 L328.60,346.88 L326.60,347.52 L324.60,347.99 L322.60,347.63 L320.60,347.39 L318.60,347.31 L316.60,347.23 L314.60,348.00 L312.60,348.97 L310.60,348.89 L308.60,348.05 L306.60,347.20 L304.60,346.90 L302.60,346.98 L300.60,347.44 L298.60,347.21 L296.60,346.61 L294.60,347.04 L292.60,347.71 L290.60,347.55 L288.60,346.84 L286.60,346.41 L284.60,346.47 L282.60,346.53 L280.60,347.94 L278.60,349.26 L276.60,348.54 L274.60,347.82 L272.60,347.88 L270.60,348.23 L268.60,348.58 L266.60,347.76 L264.60,346.93 L262.60,346.68 L260.60,346.49 L258.60,346.54 L256.60,348.08 L254.60,349.02 L252.60,348.28 L250.60,348.19 L248.60,348.51 L246.60,347.44 L244.60,346.58 L242.60,346.69 L240.60,347.03 L238.60,348.00 L236.60,348.97 L234.60,347.93 L232.60,346.52 L230.60,347.52 L228.60,347.84 L226.60,346.99 L224.60,346.35 L222.60,346.22 L220.60,346.15 L218.60,346.84 L216.60,347.54 L214.60,347.87 L212.60,347.25 L210.60,346.62 L208.60,346.50 L206.60,346.82 L204.60,347.05 L202.60,346.88 L200.60,347.00 L198.60,347.98 L196.60,348.96 L194.60,348.84 L192.60,348.38 L190.60,348.32 L188.60,348.26 L186.60,348.25 L184.60,348.25 L182.60,348.33 L180.60,348.69 L178.60,348.48 L176.60,347.91 L174.60,347.69 L172.60,348.21 L170.60,348.65 L168.60,348.18 L166.60,347.71 L164.60,347.60 L162.60,347.69 L160.60,347.58 L158.60,347.30 L156.60,347.03 L154.60,348.14 L152.60,348.98 L150.60,347.24 L148.60,346.27 L146.60,347.24 L144.60,347.91 L142.60,347.99 L140.60,347.74 L138.60,347.06 L136.60,346.39 L134.60,346.40 L132.60,346.70 L130.60,347.89 L128.60,349.01 L126.60,348.35 L124.60,347.69 L122.60,347.28 L120.60,346.99 L118.60,346.37 L116.60,345.43 L114.60,345.37 L112.60,346.07 L110.60,346.65 L108.60,346.60 L106.60,346.57 L104.60,348.20 L102.60,348.65 L100.60,348.38 L98.60,348.17 L96.60,347.99 L94.60,348.04 L92.60,348.46 L90.60,348.89 L88.60,349.00 L86.60,348.96 L84.60,348.73 L82.60,347.28 L80.60,346.36 L78.60,347.37 L76.60,348.29 L74.60,349.16 L72.60,348.32 L70.60,347.02 L68.60,346.32 L66.60,346.14 L64.60,346.16 L62.60,347.98 L60.60,347.93 L58.60,346.80 L56.60,347.14 L54.60,347.86 L52.60,348.92 L50.60,348.95 L48.60,347.94 L46.60,347.32 L44.60,346.82 L42.60,347.18 L40.60,348.00 L38.60,348.61 L36.60,347.91 L34.60,347.29 L32.60,347.99 Z" fill="#446b94"/><path d="M32.60,323.78 L34.60,322.86 L36.60,324.61 L38.60,326.98 L40.60,327.89 L42.60,326.93 L44.60,326.44 L46.60,325.86 L48.60,325.27 L50.60,325.54 L52.60,326.61 L54.60,326.65 L56.60,324.68 L58.60,322.94 L60.60,324.49 L62.60,324.96 L64.60,322.71 L66.60,322.27 L68.60,323.73 L70.60,325.70 L72.60,326.92 L74.60,327.47 L76.60,325.34 L78.60,323.16 L80.60,324.44 L82.60,326.37 L84.60,326.42 L86.60,326.00 L88.60,327.23 L90.60,328.04 L92.60,328.06 L94.60,326.14 L96.60,324.73 L98.60,326.01 L100.60,327.32 L102.60,326.08 L104.60,323.89 L106.60,323.44 L108.60,324.58 L110.60,323.95 L112.60,322.33 L114.60,321.12 L116.60,322.19 L118.60,325.00 L120.60,326.10 L122.60,326.24 L124.60,326.19 L126.60,326.30 L128.60,326.34 L130.60,324.74 L132.60,323.31 L134.60,323.87 L136.60,325.13 L138.60,325.50 L140.60,324.97 L142.60,324.08 L144.60,324.23 L146.60,323.79 L148.60,322.85 L150.60,323.55 L152.60,325.50 L154.60,325.10 L156.60,324.42 L158.60,323.90 L160.60,323.39 L162.60,323.00 L164.60,322.98 L166.60,323.24 L168.60,323.97 L170.60,324.70 L172.60,325.38 L174.60,325.83 L176.60,325.50 L178.60,325.53 L180.60,325.65 L182.60,325.22 L184.60,324.64 L186.60,323.79 L188.60,323.83 L190.60,324.01 L192.60,323.84 L194.60,324.03 L196.60,324.64 L198.60,324.16 L200.60,323.04 L202.60,322.70 L204.60,323.71 L206.60,325.51 L208.60,325.95 L210.60,325.84 L212.60,325.52 L214.60,324.71 L216.60,324.33 L218.60,325.38 L220.60,324.98 L222.60,324.24 L224.60,325.24 L226.60,326.75 L228.60,327.36 L230.60,326.66 L232.60,324.26 L234.60,323.42 L236.60,324.53 L238.60,323.63 L240.60,324.20 L242.60,325.63 L244.60,325.34 L246.60,325.36 L248.60,325.70 L250.60,324.65 L252.60,324.70 L254.60,325.68 L256.60,325.08 L258.60,324.14 L260.60,324.32 L262.60,324.36 L264.60,324.47 L266.60,325.17 L268.60,326.92 L270.60,327.77 L272.60,326.90 L274.60,325.79 L276.60,325.62 L278.60,326.05 L280.60,324.45 L282.60,322.59 L284.60,322.02 L286.60,321.98 L288.60,323.92 L290.60,325.31 L292.60,324.54 L294.60,323.99 L296.60,323.75 L298.60,324.88 L300.60,325.76 L302.60,325.96 L304.60,324.53 L306.60,323.73 L308.60,325.05 L310.60,326.38 L312.60,326.87 L314.60,326.15 L316.60,325.13 L318.60,324.97 L320.60,325.12 L322.60,325.63 L324.60,325.83 L326.60,324.91 L328.60,323.80 L330.60,322.84 L332.60,324.08 L334.60,325.91 L336.60,327.04 L338.60,326.80 L340.60,325.48 L342.60,324.31 L344.60,323.34 L346.60,322.80 L348.60,323.29 L350.60,324.29 L352.60,325.79 L354.60,327.82 L356.60,327.08 L358.60,325.22 L360.60,324.29 L362.60,323.90 L364.60,324.04 L366.60,324.64 L368.60,325.70 L370.60,325.07 L372.60,324.50 L374.60,326.14 L376.60,327.77 L378.60,328.12 L380.60,327.79 L382.60,327.49 L384.60,327.27 L386.60,327.13 L388.60,327.68 L390.60,327.11 L392.60,325.19 L394.60,326.41 L396.60,327.70 L398.60,326.56 L400.60,324.77 L402.60,323.08 L404.60,323.55 L406.60,324.64 L408.60,324.53 L410.60,323.17 L412.60,322.74 L414.60,323.08 L416.60,323.68 L418.60,324.37 L420.60,325.48 L422.60,325.99 L424.60,325.03 L426.60,324.52 L428.60,325.05 L430.60,326.40 L432.60,327.63 L434.60,326.90 L436.60,326.04 L438.60,326.36 L440.60,327.20 L442.60,326.95 L444.60,326.44 L446.60,326.33 L448.60,326.92 L450.60,327.80 L452.60,327.50 L454.60,326.38 L456.60,326.09 L458.60,326.02 L460.60,325.73 L462.60,325.90 L464.60,326.41 L466.60,326.74 L468.60,326.45 L470.60,325.50 L472.60,326.58 L474.60,327.41 L476.60,327.44 L478.60,325.82 L480.60,324.93 L482.60,324.79 L484.60,325.71 L486.60,326.63 L488.60,326.55 L490.60,325.97 L492.60,325.30 L494.60,325.83 L496.60,326.99 L498.60,328.00 L500.60,327.83 L502.60,325.76 L504.60,324.93 L506.60,324.46 L508.60,324.25 L510.60,325.46 L512.60,326.89 L514.60,326.43 L516.60,325.64 L518.60,325.51 L520.60,325.39 L522.60,325.59 L524.60,326.32 L526.60,327.62 L528.60,326.79 L530.60,325.87 L532.60,327.00 L534.60,328.46 L536.60,329.04 L538.60,328.90 L540.60,329.82 L542.60,331.16 L544.60,332.51 L546.60,333.63 L548.60,333.93 L550.60,333.29 L552.60,329.36 L554.60,324.60 L556.60,322.32 L558.60,320.72 L560.60,319.64 L562.60,319.71 L564.60,320.22 L566.60,320.53 L568.60,320.25 L570.60,319.47 L572.60,319.01 L574.60,319.62 L576.60,319.99 L578.60,319.96 L580.60,319.83 L582.60,320.08 L584.60,321.81 L586.60,324.14 L588.60,324.17 L590.60,324.10 L592.60,325.16 L594.60,325.95 L596.60,326.19 L598.60,325.67 L600.60,325.64 L602.60,325.14 L604.60,324.71 L606.60,325.62 L608.60,326.34 L610.60,326.62 L612.60,327.07 L614.60,327.49 L616.60,326.88 L618.60,326.60 L620.60,326.98 L622.60,328.34 L624.60,327.59 L626.60,325.25 L628.60,324.23 L630.60,323.50 L632.60,323.75 L634.60,325.06 L636.60,325.96 L638.60,325.99 L640.60,326.70 L642.60,326.32 L644.60,324.70 L646.60,325.21 L648.60,326.28 L650.60,325.96 L652.60,326.43 L654.60,326.64 L656.60,325.62 L658.60,324.78 L660.60,324.02 L662.60,324.18 L664.60,323.54 L666.60,323.71 L668.60,324.07 L670.60,324.22" fill="none" stroke="#5c86b0" stroke-width="0.9"/><path d="M32.60,303.17 L34.60,302.81 L36.60,303.91 L38.60,304.58 L40.60,305.61 L42.60,306.12 L44.60,305.13 L46.60,303.55 L48.60,302.09 L50.60,301.84 L52.60,302.37 L54.60,302.09 L56.60,299.83 L58.60,297.81 L60.60,299.12 L62.60,299.35 L64.60,297.66 L66.60,298.18 L68.60,299.53 L70.60,300.57 L72.60,302.06 L74.60,304.30 L76.60,303.69 L78.60,301.94 L80.60,303.64 L82.60,305.32 L84.60,305.43 L86.60,306.76 L88.60,307.28 L90.60,306.29 L92.60,307.50 L94.60,306.78 L96.60,305.68 L98.60,306.76 L100.60,307.72 L102.60,305.85 L104.60,302.83 L106.60,300.88 L108.60,301.07 L110.60,301.49 L112.60,299.45 L114.60,293.91 L116.60,293.99 L118.60,300.43 L120.60,302.22 L122.60,301.82 L124.60,301.01 L126.60,301.12 L128.60,302.62 L130.60,301.44 L132.60,299.71 L134.60,301.39 L136.60,304.25 L138.60,305.43 L140.60,301.80 L142.60,299.02 L144.60,300.35 L146.60,301.01 L148.60,301.09 L150.60,302.79 L152.60,305.57 L154.60,305.98 L156.60,305.60 L158.60,304.45 L160.60,303.52 L162.60,302.95 L164.60,301.10 L166.60,298.98 L168.60,300.73 L170.60,301.49 L172.60,301.24 L174.60,301.29 L176.60,301.60 L178.60,302.27 L180.60,302.10 L182.60,301.03 L184.60,299.65 L186.60,300.00 L188.60,302.73 L190.60,303.14 L192.60,302.33 L194.60,301.19 L196.60,300.48 L198.60,299.57 L200.60,298.82 L202.60,298.96 L204.60,301.68 L206.60,304.45 L208.60,304.44 L210.60,303.31 L212.60,301.43 L214.60,299.06 L216.60,298.65 L218.60,300.30 L220.60,301.27 L222.60,301.89 L224.60,302.62 L226.60,303.14 L228.60,303.32 L230.60,303.36 L232.60,300.75 L234.60,299.22 L236.60,299.64 L238.60,300.57 L240.60,303.30 L242.60,306.19 L244.60,304.68 L246.60,303.48 L248.60,304.29 L250.60,304.11 L252.60,304.93 L254.60,306.07 L256.60,305.62 L258.60,303.02 L260.60,301.46 L262.60,301.45 L264.60,303.64 L266.60,302.87 L268.60,304.45 L270.60,307.12 L272.60,307.59 L274.60,304.08 L276.60,301.51 L278.60,301.00 L280.60,300.81 L282.60,299.80 L284.60,299.10 L286.60,299.28 L288.60,301.84 L290.60,303.91 L292.60,303.89 L294.60,303.94 L296.60,301.39 L298.60,301.44 L300.60,305.27 L302.60,306.76 L304.60,305.09 L306.60,304.03 L308.60,304.84 L310.60,305.60 L312.60,305.87 L314.60,305.09 L316.60,304.88 L318.60,305.51 L320.60,305.91 L322.60,306.64 L324.60,306.30 L326.60,304.70 L328.60,303.00 L330.60,300.68 L332.60,299.92 L334.60,302.10 L336.60,304.37 L338.60,304.52 L340.60,302.57 L342.60,300.78 L344.60,300.04 L346.60,299.77 L348.60,300.51 L350.60,301.75 L352.60,303.14 L354.60,304.87 L356.60,304.11 L358.60,303.25 L360.60,303.31 L362.60,302.28 L364.60,300.20 L366.60,299.01 L368.60,300.31 L370.60,299.93 L372.60,300.23 L374.60,302.24 L376.60,303.77 L378.60,304.66 L380.60,305.11 L382.60,305.88 L384.60,306.81 L386.60,305.63 L388.60,305.10 L390.60,304.48 L392.60,304.25 L394.60,306.68 L396.60,304.54 L398.60,301.47 L400.60,301.54 L402.60,300.65 L404.60,301.20 L406.60,302.01 L408.60,300.37 L410.60,297.64 L412.60,299.35 L414.60,301.82 L416.60,303.02 L418.60,303.04 L420.60,303.42 L422.60,303.14 L424.60,301.53 L426.60,300.95 L428.60,302.49 L430.60,306.30 L432.60,308.33 L434.60,306.15 L436.60,303.94 L438.60,302.99 L440.60,303.11 L442.60,302.18 L444.60,301.13 L446.60,301.26 L448.60,302.08 L450.60,303.81 L452.60,304.45 L454.60,304.66 L456.60,305.83 L458.60,306.86 L460.60,305.37 L462.60,304.56 L464.60,304.86 L466.60,304.63 L468.60,303.10 L470.60,303.01 L472.60,305.27 L474.60,307.08 L476.60,306.67 L478.60,304.96 L480.60,304.38 L482.60,304.55 L484.60,305.64 L486.60,306.72 L488.60,305.88 L490.60,303.51 L492.60,301.95 L494.60,304.46 L496.60,307.60 L498.60,307.00 L500.60,304.80 L502.60,301.01 L504.60,300.14 L506.60,299.82 L508.60,301.85 L510.60,305.30 L512.60,305.06 L514.60,302.17 L516.60,303.54 L518.60,306.18 L520.60,305.98 L522.60,305.36 L524.60,304.59 L526.60,304.39 L528.60,304.56 L530.60,305.08 L532.60,306.99 L534.60,309.19 L536.60,310.64 L538.60,311.75 L540.60,313.91 L542.60,316.20 L544.60,318.04 L546.60,318.09 L548.60,317.21 L550.60,315.45 L552.60,309.32 L554.60,302.25 L556.60,298.18 L558.60,296.02 L560.60,294.44 L562.60,294.23 L564.60,294.48 L566.60,294.76 L568.60,294.52 L570.60,293.92 L572.60,293.63 L574.60,294.44 L576.60,295.02 L578.60,295.06 L580.60,294.97 L582.60,295.47 L584.60,298.46 L586.60,300.11 L588.60,298.48 L590.60,297.95 L592.60,299.35 L594.60,301.08 L596.60,303.07 L598.60,303.91 L600.60,305.05 L602.60,305.67 L604.60,304.69 L606.60,303.71 L608.60,302.66 L610.60,303.91 L612.60,304.70 L614.60,303.81 L616.60,302.54 L618.60,302.32 L620.60,302.73 L622.60,304.10 L624.60,303.35 L626.60,302.34 L628.60,302.95 L630.60,301.13 L632.60,299.89 L634.60,300.25 L636.60,303.51 L638.60,304.24 L640.60,303.80 L642.60,302.27 L644.60,301.85 L646.60,303.56 L648.60,305.58 L650.60,306.20 L652.60,306.19 L654.60,304.06 L656.60,301.72 L658.60,300.11 L660.60,298.57 L662.60,299.26 L664.60,299.17 L666.60,300.51 L668.60,302.09 L670.60,303.30 L670.60,324.22 L668.60,324.07 L666.60,323.71 L664.60,323.54 L662.60,324.18 L660.60,324.02 L658.60,324.78 L656.60,325.62 L654.60,326.64 L652.60,326.43 L650.60,325.96 L648.60,326.28 L646.60,325.21 L644.60,324.70 L642.60,326.32 L640.60,326.70 L638.60,325.99 L636.60,325.96 L634.60,325.06 L632.60,323.75 L630.60,323.50 L628.60,324.23 L626.60,325.25 L624.60,327.59 L622.60,328.34 L620.60,326.98 L618.60,326.60 L616.60,326.88 L614.60,327.49 L612.60,327.07 L610.60,326.62 L608.60,326.34 L606.60,325.62 L604.60,324.71 L602.60,325.14 L600.60,325.64 L598.60,325.67 L596.60,326.19 L594.60,325.95 L592.60,325.16 L590.60,324.10 L588.60,324.17 L586.60,324.14 L584.60,321.81 L582.60,320.08 L580.60,319.83 L578.60,319.96 L576.60,319.99 L574.60,319.62 L572.60,319.01 L570.60,319.47 L568.60,320.25 L566.60,320.53 L564.60,320.22 L562.60,319.71 L560.60,319.64 L558.60,320.72 L556.60,322.32 L554.60,324.60 L552.60,329.36 L550.60,333.29 L548.60,333.93 L546.60,333.63 L544.60,332.51 L542.60,331.16 L540.60,329.82 L538.60,328.90 L536.60,329.04 L534.60,328.46 L532.60,327.00 L530.60,325.87 L528.60,326.79 L526.60,327.62 L524.60,326.32 L522.60,325.59 L520.60,325.39 L518.60,325.51 L516.60,325.64 L514.60,326.43 L512.60,326.89 L510.60,325.46 L508.60,324.25 L506.60,324.46 L504.60,324.93 L502.60,325.76 L500.60,327.83 L498.60,328.00 L496.60,326.99 L494.60,325.83 L492.60,325.30 L490.60,325.97 L488.60,326.55 L486.60,326.63 L484.60,325.71 L482.60,324.79 L480.60,324.93 L478.60,325.82 L476.60,327.44 L474.60,327.41 L472.60,326.58 L470.60,325.50 L468.60,326.45 L466.60,326.74 L464.60,326.41 L462.60,325.90 L460.60,325.73 L458.60,326.02 L456.60,326.09 L454.60,326.38 L452.60,327.50 L450.60,327.80 L448.60,326.92 L446.60,326.33 L444.60,326.44 L442.60,326.95 L440.60,327.20 L438.60,326.36 L436.60,326.04 L434.60,326.90 L432.60,327.63 L430.60,326.40 L428.60,325.05 L426.60,324.52 L424.60,325.03 L422.60,325.99 L420.60,325.48 L418.60,324.37 L416.60,323.68 L414.60,323.08 L412.60,322.74 L410.60,323.17 L408.60,324.53 L406.60,324.64 L404.60,323.55 L402.60,323.08 L400.60,324.77 L398.60,326.56 L396.60,327.70 L394.60,326.41 L392.60,325.19 L390.60,327.11 L388.60,327.68 L386.60,327.13 L384.60,327.27 L382.60,327.49 L380.60,327.79 L378.60,328.12 L376.60,327.77 L374.60,326.14 L372.60,324.50 L370.60,325.07 L368.60,325.70 L366.60,324.64 L364.60,324.04 L362.60,323.90 L360.60,324.29 L358.60,325.22 L356.60,327.08 L354.60,327.82 L352.60,325.79 L350.60,324.29 L348.60,323.29 L346.60,322.80 L344.60,323.34 L342.60,324.31 L340.60,325.48 L338.60,326.80 L336.60,327.04 L334.60,325.91 L332.60,324.08 L330.60,322.84 L328.60,323.80 L326.60,324.91 L324.60,325.83 L322.60,325.63 L320.60,325.12 L318.60,324.97 L316.60,325.13 L314.60,326.15 L312.60,326.87 L310.60,326.38 L308.60,325.05 L306.60,323.73 L304.60,324.53 L302.60,325.96 L300.60,325.76 L298.60,324.88 L296.60,323.75 L294.60,323.99 L292.60,324.54 L290.60,325.31 L288.60,323.92 L286.60,321.98 L284.60,322.02 L282.60,322.59 L280.60,324.45 L278.60,326.05 L276.60,325.62 L274.60,325.79 L272.60,326.90 L270.60,327.77 L268.60,326.92 L266.60,325.17 L264.60,324.47 L262.60,324.36 L260.60,324.32 L258.60,324.14 L256.60,325.08 L254.60,325.68 L252.60,324.70 L250.60,324.65 L248.60,325.70 L246.60,325.36 L244.60,325.34 L242.60,325.63 L240.60,324.20 L238.60,323.63 L236.60,324.53 L234.60,323.42 L232.60,324.26 L230.60,326.66 L228.60,327.36 L226.60,326.75 L224.60,325.24 L222.60,324.24 L220.60,324.98 L218.60,325.38 L216.60,324.33 L214.60,324.71 L212.60,325.52 L210.60,325.84 L208.60,325.95 L206.60,325.51 L204.60,323.71 L202.60,322.70 L200.60,323.04 L198.60,324.16 L196.60,324.64 L194.60,324.03 L192.60,323.84 L190.60,324.01 L188.60,323.83 L186.60,323.79 L184.60,324.64 L182.60,325.22 L180.60,325.65 L178.60,325.53 L176.60,325.50 L174.60,325.83 L172.60,325.38 L170.60,324.70 L168.60,323.97 L166.60,323.24 L164.60,322.98 L162.60,323.00 L160.60,323.39 L158.60,323.90 L156.60,324.42 L154.60,325.10 L152.60,325.50 L150.60,323.55 L148.60,322.85 L146.60,323.79 L144.60,324.23 L142.60,324.08 L140.60,324.97 L138.60,325.50 L136.60,325.13 L134.60,323.87 L132.60,323.31 L130.60,324.74 L128.60,326.34 L126.60,326.30 L124.60,326.19 L122.60,326.24 L120.60,326.10 L118.60,325.00 L116.60,322.19 L114.60,321.12 L112.60,322.33 L110.60,323.95 L108.60,324.58 L106.60,323.44 L104.60,323.89 L102.60,326.08 L100.60,327.32 L98.60,326.01 L96.60,324.73 L94.60,326.14 L92.60,328.06 L90.60,328.04 L88.60,327.23 L86.60,326.00 L84.60,326.42 L82.60,326.37 L80.60,324.44 L78.60,323.16 L76.60,325.34 L74.60,327.47 L72.60,326.92 L70.60,325.70 L68.60,323.73 L66.60,322.27 L64.60,322.71 L62.60,324.96 L60.60,324.49 L58.60,322.94 L56.60,324.68 L54.60,326.65 L52.60,326.61 L50.60,325.54 L48.60,325.27 L46.60,325.86 L44.60,326.44 L42.60,326.93 L40.60,327.89 L38.60,326.98 L36.60,324.61 L34.60,322.86 L32.60,323.78 Z" fill="#1c578e"/><path d="M32.60,303.17 L34.60,302.81 L36.60,303.91 L38.60,304.58 L40.60,305.61 L42.60,306.12 L44.60,305.13 L46.60,303.55 L48.60,302.09 L50.60,301.84 L52.60,302.37 L54.60,302.09 L56.60,299.83 L58.60,297.81 L60.60,299.12 L62.60,299.35 L64.60,297.66 L66.60,298.18 L68.60,299.53 L70.60,300.57 L72.60,302.06 L74.60,304.30 L76.60,303.69 L78.60,301.94 L80.60,303.64 L82.60,305.32 L84.60,305.43 L86.60,306.76 L88.60,307.28 L90.60,306.29 L92.60,307.50 L94.60,306.78 L96.60,305.68 L98.60,306.76 L100.60,307.72 L102.60,305.85 L104.60,302.83 L106.60,300.88 L108.60,301.07 L110.60,301.49 L112.60,299.45 L114.60,293.91 L116.60,293.99 L118.60,300.43 L120.60,302.22 L122.60,301.82 L124.60,301.01 L126.60,301.12 L128.60,302.62 L130.60,301.44 L132.60,299.71 L134.60,301.39 L136.60,304.25 L138.60,305.43 L140.60,301.80 L142.60,299.02 L144.60,300.35 L146.60,301.01 L148.60,301.09 L150.60,302.79 L152.60,305.57 L154.60,305.98 L156.60,305.60 L158.60,304.45 L160.60,303.52 L162.60,302.95 L164.60,301.10 L166.60,298.98 L168.60,300.73 L170.60,301.49 L172.60,301.24 L174.60,301.29 L176.60,301.60 L178.60,302.27 L180.60,302.10 L182.60,301.03 L184.60,299.65 L186.60,300.00 L188.60,302.73 L190.60,303.14 L192.60,302.33 L194.60,301.19 L196.60,300.48 L198.60,299.57 L200.60,298.82 L202.60,298.96 L204.60,301.68 L206.60,304.45 L208.60,304.44 L210.60,303.31 L212.60,301.43 L214.60,299.06 L216.60,298.65 L218.60,300.30 L220.60,301.27 L222.60,301.89 L224.60,302.62 L226.60,303.14 L228.60,303.32 L230.60,303.36 L232.60,300.75 L234.60,299.22 L236.60,299.64 L238.60,300.57 L240.60,303.30 L242.60,306.19 L244.60,304.68 L246.60,303.48 L248.60,304.29 L250.60,304.11 L252.60,304.93 L254.60,306.07 L256.60,305.62 L258.60,303.02 L260.60,301.46 L262.60,301.45 L264.60,303.64 L266.60,302.87 L268.60,304.45 L270.60,307.12 L272.60,307.59 L274.60,304.08 L276.60,301.51 L278.60,301.00 L280.60,300.81 L282.60,299.80 L284.60,299.10 L286.60,299.28 L288.60,301.84 L290.60,303.91 L292.60,303.89 L294.60,303.94 L296.60,301.39 L298.60,301.44 L300.60,305.27 L302.60,306.76 L304.60,305.09 L306.60,304.03 L308.60,304.84 L310.60,305.60 L312.60,305.87 L314.60,305.09 L316.60,304.88 L318.60,305.51 L320.60,305.91 L322.60,306.64 L324.60,306.30 L326.60,304.70 L328.60,303.00 L330.60,300.68 L332.60,299.92 L334.60,302.10 L336.60,304.37 L338.60,304.52 L340.60,302.57 L342.60,300.78 L344.60,300.04 L346.60,299.77 L348.60,300.51 L350.60,301.75 L352.60,303.14 L354.60,304.87 L356.60,304.11 L358.60,303.25 L360.60,303.31 L362.60,302.28 L364.60,300.20 L366.60,299.01 L368.60,300.31 L370.60,299.93 L372.60,300.23 L374.60,302.24 L376.60,303.77 L378.60,304.66 L380.60,305.11 L382.60,305.88 L384.60,306.81 L386.60,305.63 L388.60,305.10 L390.60,304.48 L392.60,304.25 L394.60,306.68 L396.60,304.54 L398.60,301.47 L400.60,301.54 L402.60,300.65 L404.60,301.20 L406.60,302.01 L408.60,300.37 L410.60,297.64 L412.60,299.35 L414.60,301.82 L416.60,303.02 L418.60,303.04 L420.60,303.42 L422.60,303.14 L424.60,301.53 L426.60,300.95 L428.60,302.49 L430.60,306.30 L432.60,308.33 L434.60,306.15 L436.60,303.94 L438.60,302.99 L440.60,303.11 L442.60,302.18 L444.60,301.13 L446.60,301.26 L448.60,302.08 L450.60,303.81 L452.60,304.45 L454.60,304.66 L456.60,305.83 L458.60,306.86 L460.60,305.37 L462.60,304.56 L464.60,304.86 L466.60,304.63 L468.60,303.10 L470.60,303.01 L472.60,305.27 L474.60,307.08 L476.60,306.67 L478.60,304.96 L480.60,304.38 L482.60,304.55 L484.60,305.64 L486.60,306.72 L488.60,305.88 L490.60,303.51 L492.60,301.95 L494.60,304.46 L496.60,307.60 L498.60,307.00 L500.60,304.80 L502.60,301.01 L504.60,300.14 L506.60,299.82 L508.60,301.85 L510.60,305.30 L512.60,305.06 L514.60,302.17 L516.60,303.54 L518.60,306.18 L520.60,305.98 L522.60,305.36 L524.60,304.59 L526.60,304.39 L528.60,304.56 L530.60,305.08 L532.60,306.99 L534.60,309.19 L536.60,310.64 L538.60,311.75 L540.60,313.91 L542.60,316.20 L544.60,318.04 L546.60,318.09 L548.60,317.21 L550.60,315.45 L552.60,309.32 L554.60,302.25 L556.60,298.18 L558.60,296.02 L560.60,294.44 L562.60,294.23 L564.60,294.48 L566.60,294.76 L568.60,294.52 L570.60,293.92 L572.60,293.63 L574.60,294.44 L576.60,295.02 L578.60,295.06 L580.60,294.97 L582.60,295.47 L584.60,298.46 L586.60,300.11 L588.60,298.48 L590.60,297.95 L592.60,299.35 L594.60,301.08 L596.60,303.07 L598.60,303.91 L600.60,305.05 L602.60,305.67 L604.60,304.69 L606.60,303.71 L608.60,302.66 L610.60,303.91 L612.60,304.70 L614.60,303.81 L616.60,302.54 L618.60,302.32 L620.60,302.73 L622.60,304.10 L624.60,303.35 L626.60,302.34 L628.60,302.95 L630.60,301.13 L632.60,299.89 L634.60,300.25 L636.60,303.51 L638.60,304.24 L640.60,303.80 L642.60,302.27 L644.60,301.85 L646.60,303.56 L648.60,305.58 L650.60,306.20 L652.60,306.19 L654.60,304.06 L656.60,301.72 L658.60,300.11 L660.60,298.57 L662.60,299.26 L664.60,299.17 L666.60,300.51 L668.60,302.09 L670.60,303.30" fill="none" stroke="#2e6ea8" stroke-width="0.9"/><path d="M32.60,280.69 L34.60,280.22 L36.60,280.80 L38.60,281.55 L40.60,283.33 L42.60,284.20 L44.60,282.88 L46.60,280.98 L48.60,279.34 L50.60,278.97 L52.60,279.22 L54.60,278.77 L56.60,277.09 L58.60,275.65 L60.60,277.49 L62.60,278.16 L64.60,276.76 L66.60,277.32 L68.60,278.03 L70.60,278.00 L72.60,279.75 L74.60,282.04 L76.60,281.23 L78.60,279.24 L80.60,280.66 L82.60,282.18 L84.60,283.85 L86.60,286.21 L88.60,286.46 L90.60,285.18 L92.60,285.61 L94.60,284.11 L96.60,282.48 L98.60,283.68 L100.60,284.76 L102.60,283.52 L104.60,281.09 L106.60,279.38 L108.60,279.70 L110.60,279.86 L112.60,277.49 L114.60,271.31 L116.60,271.59 L118.60,279.18 L120.60,281.55 L122.60,280.80 L124.60,279.47 L126.60,279.15 L128.60,281.00 L130.60,280.18 L132.60,278.02 L134.60,279.15 L136.60,281.79 L138.60,283.14 L140.60,279.67 L142.60,276.85 L144.60,278.08 L146.60,278.49 L148.60,278.47 L150.60,280.22 L152.60,283.20 L154.60,283.99 L156.60,284.75 L158.60,283.40 L160.60,280.93 L162.60,280.37 L164.60,279.08 L166.60,276.59 L168.60,277.73 L170.60,278.22 L172.60,278.51 L174.60,278.74 L176.60,278.92 L178.60,279.47 L180.60,279.87 L182.60,279.32 L184.60,278.24 L186.60,278.89 L188.60,281.33 L190.60,281.13 L192.60,280.34 L194.60,279.70 L196.60,279.49 L198.60,278.63 L200.60,277.92 L202.60,277.73 L204.60,279.92 L206.60,282.46 L208.60,282.21 L210.60,281.43 L212.60,280.13 L214.60,278.34 L216.60,277.45 L218.60,278.61 L220.60,278.80 L222.60,278.78 L224.60,280.88 L226.60,281.69 L228.60,281.02 L230.60,281.67 L232.60,279.66 L234.60,277.95 L236.60,277.86 L238.60,278.28 L240.60,280.41 L242.60,283.16 L244.60,282.46 L246.60,282.06 L248.60,283.25 L250.60,283.31 L252.60,284.27 L254.60,284.90 L256.60,284.10 L258.60,281.64 L260.60,280.23 L262.60,280.37 L264.60,282.71 L266.60,282.03 L268.60,283.65 L270.60,286.35 L272.60,286.61 L274.60,282.90 L276.60,279.85 L278.60,278.52 L280.60,277.89 L282.60,277.53 L284.60,277.14 L286.60,277.25 L288.60,279.73 L290.60,281.69 L292.60,281.78 L294.60,282.71 L296.60,280.30 L298.60,279.29 L300.60,282.80 L302.60,284.00 L304.60,282.46 L306.60,281.66 L308.60,282.71 L310.60,283.69 L312.60,283.97 L314.60,283.20 L316.60,282.87 L318.60,283.29 L320.60,283.34 L322.60,283.60 L324.60,284.44 L326.60,284.14 L328.60,281.52 L330.60,277.75 L332.60,277.06 L334.60,279.87 L336.60,282.76 L338.60,282.01 L340.60,279.61 L342.60,279.52 L344.60,279.48 L346.60,278.35 L348.60,279.15 L350.60,280.97 L352.60,282.39 L354.60,282.95 L356.60,281.95 L358.60,282.06 L360.60,282.36 L362.60,280.97 L364.60,278.57 L366.60,277.31 L368.60,278.55 L370.60,278.13 L372.60,278.39 L374.60,280.28 L376.60,281.44 L378.60,281.98 L380.60,282.45 L382.60,283.67 L384.60,285.02 L386.60,284.01 L388.60,283.65 L390.60,282.14 L392.60,281.18 L394.60,283.77 L396.60,281.79 L398.60,278.97 L400.60,279.31 L402.60,278.66 L404.60,279.31 L406.60,280.21 L408.60,278.81 L410.60,276.55 L412.60,278.73 L414.60,280.87 L416.60,281.22 L418.60,281.02 L420.60,281.46 L422.60,281.27 L424.60,279.85 L426.60,279.47 L428.60,280.70 L430.60,283.91 L432.60,285.84 L434.60,284.81 L436.60,283.71 L438.60,282.78 L440.60,282.94 L442.60,281.86 L444.60,280.61 L446.60,280.65 L448.60,281.39 L450.60,283.14 L452.60,283.92 L454.60,284.23 L456.60,284.17 L458.60,284.64 L460.60,283.92 L462.60,283.88 L464.60,284.15 L466.60,283.44 L468.60,281.79 L470.60,282.17 L472.60,284.85 L474.60,286.66 L476.60,285.88 L478.60,283.66 L480.60,282.60 L482.60,283.30 L484.60,284.92 L486.60,285.26 L488.60,283.34 L490.60,280.45 L492.60,279.12 L494.60,281.49 L496.60,284.35 L498.60,283.61 L500.60,281.94 L502.60,278.68 L504.60,277.59 L506.60,277.07 L508.60,279.39 L510.60,282.93 L512.60,282.15 L514.60,278.72 L516.60,281.23 L518.60,285.06 L520.60,285.25 L522.60,284.10 L524.60,282.74 L526.60,281.92 L528.60,282.41 L530.60,283.73 L532.60,286.55 L534.60,289.61 L536.60,291.43 L538.60,293.04 L540.60,296.13 L542.60,299.48 L544.60,302.03 L546.60,300.98 L548.60,299.01 L550.60,296.36 L552.60,289.64 L554.60,281.39 L556.60,275.01 L558.60,271.82 L560.60,269.80 L562.60,269.66 L564.60,270.20 L566.60,270.78 L568.60,270.46 L570.60,269.78 L572.60,269.36 L574.60,269.95 L576.60,270.37 L578.60,270.37 L580.60,270.25 L582.60,271.00 L584.60,274.06 L586.60,276.70 L588.60,275.24 L590.60,274.12 L592.60,275.55 L594.60,278.03 L596.60,280.62 L598.60,281.84 L600.60,283.39 L602.60,284.42 L604.60,283.85 L606.60,283.18 L608.60,281.96 L610.60,283.11 L612.60,284.00 L614.60,283.20 L616.60,281.46 L618.60,280.65 L620.60,280.69 L622.60,282.85 L624.60,282.70 L626.60,280.95 L628.60,280.81 L630.60,278.14 L632.60,276.95 L634.60,278.26 L636.60,281.97 L638.60,282.81 L640.60,281.68 L642.60,279.27 L644.60,279.94 L646.60,282.09 L648.60,283.94 L650.60,284.43 L652.60,284.42 L654.60,282.45 L656.60,280.50 L658.60,278.21 L660.60,275.91 L662.60,277.08 L664.60,277.58 L666.60,279.14 L668.60,280.92 L670.60,282.29 L670.60,303.30 L668.60,302.09 L666.60,300.51 L664.60,299.17 L662.60,299.26 L660.60,298.57 L658.60,300.11 L656.60,301.72 L654.60,304.06 L652.60,306.19 L650.60,306.20 L648.60,305.58 L646.60,303.56 L644.60,301.85 L642.60,302.27 L640.60,303.80 L638.60,304.24 L636.60,303.51 L634.60,300.25 L632.60,299.89 L630.60,301.13 L628.60,302.95 L626.60,302.34 L624.60,303.35 L622.60,304.10 L620.60,302.73 L618.60,302.32 L616.60,302.54 L614.60,303.81 L612.60,304.70 L610.60,303.91 L608.60,302.66 L606.60,303.71 L604.60,304.69 L602.60,305.67 L600.60,305.05 L598.60,303.91 L596.60,303.07 L594.60,301.08 L592.60,299.35 L590.60,297.95 L588.60,298.48 L586.60,300.11 L584.60,298.46 L582.60,295.47 L580.60,294.97 L578.60,295.06 L576.60,295.02 L574.60,294.44 L572.60,293.63 L570.60,293.92 L568.60,294.52 L566.60,294.76 L564.60,294.48 L562.60,294.23 L560.60,294.44 L558.60,296.02 L556.60,298.18 L554.60,302.25 L552.60,309.32 L550.60,315.45 L548.60,317.21 L546.60,318.09 L544.60,318.04 L542.60,316.20 L540.60,313.91 L538.60,311.75 L536.60,310.64 L534.60,309.19 L532.60,306.99 L530.60,305.08 L528.60,304.56 L526.60,304.39 L524.60,304.59 L522.60,305.36 L520.60,305.98 L518.60,306.18 L516.60,303.54 L514.60,302.17 L512.60,305.06 L510.60,305.30 L508.60,301.85 L506.60,299.82 L504.60,300.14 L502.60,301.01 L500.60,304.80 L498.60,307.00 L496.60,307.60 L494.60,304.46 L492.60,301.95 L490.60,303.51 L488.60,305.88 L486.60,306.72 L484.60,305.64 L482.60,304.55 L480.60,304.38 L478.60,304.96 L476.60,306.67 L474.60,307.08 L472.60,305.27 L470.60,303.01 L468.60,303.10 L466.60,304.63 L464.60,304.86 L462.60,304.56 L460.60,305.37 L458.60,306.86 L456.60,305.83 L454.60,304.66 L452.60,304.45 L450.60,303.81 L448.60,302.08 L446.60,301.26 L444.60,301.13 L442.60,302.18 L440.60,303.11 L438.60,302.99 L436.60,303.94 L434.60,306.15 L432.60,308.33 L430.60,306.30 L428.60,302.49 L426.60,300.95 L424.60,301.53 L422.60,303.14 L420.60,303.42 L418.60,303.04 L416.60,303.02 L414.60,301.82 L412.60,299.35 L410.60,297.64 L408.60,300.37 L406.60,302.01 L404.60,301.20 L402.60,300.65 L400.60,301.54 L398.60,301.47 L396.60,304.54 L394.60,306.68 L392.60,304.25 L390.60,304.48 L388.60,305.10 L386.60,305.63 L384.60,306.81 L382.60,305.88 L380.60,305.11 L378.60,304.66 L376.60,303.77 L374.60,302.24 L372.60,300.23 L370.60,299.93 L368.60,300.31 L366.60,299.01 L364.60,300.20 L362.60,302.28 L360.60,303.31 L358.60,303.25 L356.60,304.11 L354.60,304.87 L352.60,303.14 L350.60,301.75 L348.60,300.51 L346.60,299.77 L344.60,300.04 L342.60,300.78 L340.60,302.57 L338.60,304.52 L336.60,304.37 L334.60,302.10 L332.60,299.92 L330.60,300.68 L328.60,303.00 L326.60,304.70 L324.60,306.30 L322.60,306.64 L320.60,305.91 L318.60,305.51 L316.60,304.88 L314.60,305.09 L312.60,305.87 L310.60,305.60 L308.60,304.84 L306.60,304.03 L304.60,305.09 L302.60,306.76 L300.60,305.27 L298.60,301.44 L296.60,301.39 L294.60,303.94 L292.60,303.89 L290.60,303.91 L288.60,301.84 L286.60,299.28 L284.60,299.10 L282.60,299.80 L280.60,300.81 L278.60,301.00 L276.60,301.51 L274.60,304.08 L272.60,307.59 L270.60,307.12 L268.60,304.45 L266.60,302.87 L264.60,303.64 L262.60,301.45 L260.60,301.46 L258.60,303.02 L256.60,305.62 L254.60,306.07 L252.60,304.93 L250.60,304.11 L248.60,304.29 L246.60,303.48 L244.60,304.68 L242.60,306.19 L240.60,303.30 L238.60,300.57 L236.60,299.64 L234.60,299.22 L232.60,300.75 L230.60,303.36 L228.60,303.32 L226.60,303.14 L224.60,302.62 L222.60,301.89 L220.60,301.27 L218.60,300.30 L216.60,298.65 L214.60,299.06 L212.60,301.43 L210.60,303.31 L208.60,304.44 L206.60,304.45 L204.60,301.68 L202.60,298.96 L200.60,298.82 L198.60,299.57 L196.60,300.48 L194.60,301.19 L192.60,302.33 L190.60,303.14 L188.60,302.73 L186.60,300.00 L184.60,299.65 L182.60,301.03 L180.60,302.10 L178.60,302.27 L176.60,301.60 L174.60,301.29 L172.60,301.24 L170.60,301.49 L168.60,300.73 L166.60,298.98 L164.60,301.10 L162.60,302.95 L160.60,303.52 L158.60,304.45 L156.60,305.60 L154.60,305.98 L152.60,305.57 L150.60,302.79 L148.60,301.09 L146.60,301.01 L144.60,300.35 L142.60,299.02 L140.60,301.80 L138.60,305.43 L136.60,304.25 L134.60,301.39 L132.60,299.71 L130.60,301.44 L128.60,302.62 L126.60,301.12 L124.60,301.01 L122.60,301.82 L120.60,302.22 L118.60,300.43 L116.60,293.99 L114.60,293.91 L112.60,299.45 L110.60,301.49 L108.60,301.07 L106.60,300.88 L104.60,302.83 L102.60,305.85 L100.60,307.72 L98.60,306.76 L96.60,305.68 L94.60,306.78 L92.60,307.50 L90.60,306.29 L88.60,307.28 L86.60,306.76 L84.60,305.43 L82.60,305.32 L80.60,303.64 L78.60,301.94 L76.60,303.69 L74.60,304.30 L72.60,302.06 L70.60,300.57 L68.60,299.53 L66.60,298.18 L64.60,297.66 L62.60,299.35 L60.60,299.12 L58.60,297.81 L56.60,299.83 L54.60,302.09 L52.60,302.37 L50.60,301.84 L48.60,302.09 L46.60,303.55 L44.60,305.13 L42.60,306.12 L40.60,305.61 L38.60,304.58 L36.60,303.91 L34.60,302.81 L32.60,303.17 Z" fill="#15375b"/><path d="M32.60,280.69 L34.60,280.22 L36.60,280.80 L38.60,281.55 L40.60,283.33 L42.60,284.20 L44.60,282.88 L46.60,280.98 L48.60,279.34 L50.60,278.97 L52.60,279.22 L54.60,278.77 L56.60,277.09 L58.60,275.65 L60.60,277.49 L62.60,278.16 L64.60,276.76 L66.60,277.32 L68.60,278.03 L70.60,278.00 L72.60,279.75 L74.60,282.04 L76.60,281.23 L78.60,279.24 L80.60,280.66 L82.60,282.18 L84.60,283.85 L86.60,286.21 L88.60,286.46 L90.60,285.18 L92.60,285.61 L94.60,284.11 L96.60,282.48 L98.60,283.68 L100.60,284.76 L102.60,283.52 L104.60,281.09 L106.60,279.38 L108.60,279.70 L110.60,279.86 L112.60,277.49 L114.60,271.31 L116.60,271.59 L118.60,279.18 L120.60,281.55 L122.60,280.80 L124.60,279.47 L126.60,279.15 L128.60,281.00 L130.60,280.18 L132.60,278.02 L134.60,279.15 L136.60,281.79 L138.60,283.14 L140.60,279.67 L142.60,276.85 L144.60,278.08 L146.60,278.49 L148.60,278.47 L150.60,280.22 L152.60,283.20 L154.60,283.99 L156.60,284.75 L158.60,283.40 L160.60,280.93 L162.60,280.37 L164.60,279.08 L166.60,276.59 L168.60,277.73 L170.60,278.22 L172.60,278.51 L174.60,278.74 L176.60,278.92 L178.60,279.47 L180.60,279.87 L182.60,279.32 L184.60,278.24 L186.60,278.89 L188.60,281.33 L190.60,281.13 L192.60,280.34 L194.60,279.70 L196.60,279.49 L198.60,278.63 L200.60,277.92 L202.60,277.73 L204.60,279.92 L206.60,282.46 L208.60,282.21 L210.60,281.43 L212.60,280.13 L214.60,278.34 L216.60,277.45 L218.60,278.61 L220.60,278.80 L222.60,278.78 L224.60,280.88 L226.60,281.69 L228.60,281.02 L230.60,281.67 L232.60,279.66 L234.60,277.95 L236.60,277.86 L238.60,278.28 L240.60,280.41 L242.60,283.16 L244.60,282.46 L246.60,282.06 L248.60,283.25 L250.60,283.31 L252.60,284.27 L254.60,284.90 L256.60,284.10 L258.60,281.64 L260.60,280.23 L262.60,280.37 L264.60,282.71 L266.60,282.03 L268.60,283.65 L270.60,286.35 L272.60,286.61 L274.60,282.90 L276.60,279.85 L278.60,278.52 L280.60,277.89 L282.60,277.53 L284.60,277.14 L286.60,277.25 L288.60,279.73 L290.60,281.69 L292.60,281.78 L294.60,282.71 L296.60,280.30 L298.60,279.29 L300.60,282.80 L302.60,284.00 L304.60,282.46 L306.60,281.66 L308.60,282.71 L310.60,283.69 L312.60,283.97 L314.60,283.20 L316.60,282.87 L318.60,283.29 L320.60,283.34 L322.60,283.60 L324.60,284.44 L326.60,284.14 L328.60,281.52 L330.60,277.75 L332.60,277.06 L334.60,279.87 L336.60,282.76 L338.60,282.01 L340.60,279.61 L342.60,279.52 L344.60,279.48 L346.60,278.35 L348.60,279.15 L350.60,280.97 L352.60,282.39 L354.60,282.95 L356.60,281.95 L358.60,282.06 L360.60,282.36 L362.60,280.97 L364.60,278.57 L366.60,277.31 L368.60,278.55 L370.60,278.13 L372.60,278.39 L374.60,280.28 L376.60,281.44 L378.60,281.98 L380.60,282.45 L382.60,283.67 L384.60,285.02 L386.60,284.01 L388.60,283.65 L390.60,282.14 L392.60,281.18 L394.60,283.77 L396.60,281.79 L398.60,278.97 L400.60,279.31 L402.60,278.66 L404.60,279.31 L406.60,280.21 L408.60,278.81 L410.60,276.55 L412.60,278.73 L414.60,280.87 L416.60,281.22 L418.60,281.02 L420.60,281.46 L422.60,281.27 L424.60,279.85 L426.60,279.47 L428.60,280.70 L430.60,283.91 L432.60,285.84 L434.60,284.81 L436.60,283.71 L438.60,282.78 L440.60,282.94 L442.60,281.86 L444.60,280.61 L446.60,280.65 L448.60,281.39 L450.60,283.14 L452.60,283.92 L454.60,284.23 L456.60,284.17 L458.60,284.64 L460.60,283.92 L462.60,283.88 L464.60,284.15 L466.60,283.44 L468.60,281.79 L470.60,282.17 L472.60,284.85 L474.60,286.66 L476.60,285.88 L478.60,283.66 L480.60,282.60 L482.60,283.30 L484.60,284.92 L486.60,285.26 L488.60,283.34 L490.60,280.45 L492.60,279.12 L494.60,281.49 L496.60,284.35 L498.60,283.61 L500.60,281.94 L502.60,278.68 L504.60,277.59 L506.60,277.07 L508.60,279.39 L510.60,282.93 L512.60,282.15 L514.60,278.72 L516.60,281.23 L518.60,285.06 L520.60,285.25 L522.60,284.10 L524.60,282.74 L526.60,281.92 L528.60,282.41 L530.60,283.73 L532.60,286.55 L534.60,289.61 L536.60,291.43 L538.60,293.04 L540.60,296.13 L542.60,299.48 L544.60,302.03 L546.60,300.98 L548.60,299.01 L550.60,296.36 L552.60,289.64 L554.60,281.39 L556.60,275.01 L558.60,271.82 L560.60,269.80 L562.60,269.66 L564.60,270.20 L566.60,270.78 L568.60,270.46 L570.60,269.78 L572.60,269.36 L574.60,269.95 L576.60,270.37 L578.60,270.37 L580.60,270.25 L582.60,271.00 L584.60,274.06 L586.60,276.70 L588.60,275.24 L590.60,274.12 L592.60,275.55 L594.60,278.03 L596.60,280.62 L598.60,281.84 L600.60,283.39 L602.60,284.42 L604.60,283.85 L606.60,283.18 L608.60,281.96 L610.60,283.11 L612.60,284.00 L614.60,283.20 L616.60,281.46 L618.60,280.65 L620.60,280.69 L622.60,282.85 L624.60,282.70 L626.60,280.95 L628.60,280.81 L630.60,278.14 L632.60,276.95 L634.60,278.26 L636.60,281.97 L638.60,282.81 L640.60,281.68 L642.60,279.27 L644.60,279.94 L646.60,282.09 L648.60,283.94 L650.60,284.43 L652.60,284.42 L654.60,282.45 L656.60,280.50 L658.60,278.21 L660.60,275.91 L662.60,277.08 L664.60,277.58 L666.60,279.14 L668.60,280.92 L670.60,282.29" fill="none" stroke="#1e4670" stroke-width="0.9"/><line x1="34.20" y1="256.0" x2="34.20" y2="369.7" stroke="#ffffff" stroke-opacity="0.06" stroke-width="1"/><line x1="87.50" y1="256.0" x2="87.50" y2="369.7" stroke="#ffffff" stroke-opacity="0.06" stroke-width="1"/><line x1="140.80" y1="256.0" x2="140.80" y2="369.7" stroke="#ffffff" stroke-opacity="0.06" stroke-width="1"/><line x1="194.10" y1="256.0" x2="194.10" y2="369.7" stroke="#ffffff" stroke-opacity="0.06" stroke-width="1"/><line x1="247.40" y1="256.0" x2="247.40" y2="369.7" stroke="#ffffff" stroke-opacity="0.06" stroke-width="1"/><line x1="300.70" y1="256.0" x2="300.70" y2="369.7" stroke="#ffffff" stroke-opacity="0.06" stroke-width="1"/><line x1="354.00" y1="256.0" x2="354.00" y2="369.7" stroke="#ffffff" stroke-opacity="0.06" stroke-width="1"/><line x1="407.30" y1="256.0" x2="407.30" y2="369.7" stroke="#ffffff" stroke-opacity="0.06" stroke-width="1"/><line x1="460.60" y1="256.0" x2="460.60" y2="369.7" stroke="#ffffff" stroke-opacity="0.06" stroke-width="1"/><line x1="513.90" y1="256.0" x2="513.90" y2="369.7" stroke="#ffffff" stroke-opacity="0.06" stroke-width="1"/><line x1="567.20" y1="256.0" x2="567.20" y2="369.7" stroke="#ffffff" stroke-opacity="0.06" stroke-width="1"/><line x1="620.50" y1="256.0" x2="620.50" y2="369.7" stroke="#ffffff" stroke-opacity="0.06" stroke-width="1"/><line x1="34.2" y1="256.00" x2="671.0" y2="256.00" stroke="#ffffff" stroke-opacity="0.05" stroke-width="1"/><line x1="34.2" y1="293.90" x2="671.0" y2="293.90" stroke="#ffffff" stroke-opacity="0.05" stroke-width="1"/><line x1="34.2" y1="331.80" x2="671.0" y2="331.80" stroke="#ffffff" stroke-opacity="0.05" stroke-width="1"/><line x1="34.2" y1="369.70" x2="671.0" y2="369.70" stroke="#ffffff" stroke-opacity="0.05" stroke-width="1"/><rect x="21.7" y="393.5" width="8.4" height="2.7" rx="1.35" fill="#c8e0ff"/><text x="38.70" y="397.70" font-size="8.1" fill="#d6d6de" font-weight="normal" text-anchor="start" textLength="52.5" lengthAdjust="spacingAndGlyphs">web_server_01</text><rect x="101.2" y="393.5" width="8.4" height="2.7" rx="1.35" fill="#4d9be0"/><text x="118.20" y="397.70" font-size="8.1" fill="#d6d6de" font-weight="normal" text-anchor="start" textLength="52.5" lengthAdjust="spacingAndGlyphs">web_server_02</text><rect x="181.9" y="393.5" width="8.4" height="2.7" rx="1.35" fill="#2b86dc"/><text x="198.90" y="397.70" font-size="8.1" fill="#d6d6de" font-weight="normal" text-anchor="start" textLength="52.5" lengthAdjust="spacingAndGlyphs">web_server_03</text><rect x="264.0" y="393.5" width="8.4" height="2.7" rx="1.35" fill="#1f5aa6"/><text x="281.00" y="397.70" font-size="8.1" fill="#d6d6de" font-weight="normal" text-anchor="start" textLength="52.5" lengthAdjust="spacingAndGlyphs">web_server_04</text><text x="699.00" y="238.00" font-size="9.0" fill="#d6d6de" font-weight="normal" text-anchor="start" stroke="#d6d6de" stroke-width="0.3" textLength="47.6" lengthAdjust="spacingAndGlyphs">Google hits</text><rect x="698.90" y="266.4" width="60.3" height="121.60" fill="#232327"/><rect x="698.90" y="386.60" width="60.3" height="1.40" fill="#5794f2" fill-opacity="0.35"/><rect x="698.90" y="386.60" width="60.3" height="1.6" fill="#5794f2"/><text x="729.05" y="261.90" font-size="16.3" fill="#5794f2" font-weight="normal" text-anchor="middle" >0.400</text><text x="729.00" y="398.00" font-size="9.0" fill="#d6d6de" font-weight="normal" text-anchor="middle" textLength="34.5" lengthAdjust="spacingAndGlyphs">A-series</text><rect x="765.25" y="266.4" width="60.3" height="121.60" fill="#232327"/><rect x="765.25" y="353.10" width="60.3" height="34.90" fill="#5794f2" fill-opacity="0.35"/><rect x="765.25" y="353.10" width="60.3" height="1.6" fill="#5794f2"/><text x="795.40" y="261.90" font-size="16.3" fill="#5794f2" font-weight="normal" text-anchor="middle" >27.7</text><text x="795.35" y="398.00" font-size="9.0" fill="#d6d6de" font-weight="normal" text-anchor="middle" textLength="34.5" lengthAdjust="spacingAndGlyphs">B-series</text><rect x="831.60" y="266.4" width="60.3" height="121.60" fill="#232327"/><rect x="831.60" y="341.80" width="60.3" height="46.20" fill="#5794f2" fill-opacity="0.35"/><rect x="831.60" y="341.80" width="60.3" height="1.6" fill="#5794f2"/><text x="861.75" y="261.90" font-size="16.3" fill="#5794f2" font-weight="normal" text-anchor="middle" >37.1</text><text x="861.70" y="398.00" font-size="9.0" fill="#d6d6de" font-weight="normal" text-anchor="middle" textLength="34.5" lengthAdjust="spacingAndGlyphs">C-series</text><rect x="897.95" y="266.4" width="60.3" height="121.60" fill="#232327"/><rect x="897.95" y="305.20" width="60.3" height="82.80" fill="#b877d9" fill-opacity="0.35"/><rect x="897.95" y="305.20" width="60.3" height="1.6" fill="#b877d9"/><text x="928.10" y="261.90" font-size="16.3" fill="#b877d9" font-weight="normal" text-anchor="middle" >66.5</text><text x="928.05" y="398.00" font-size="9.0" fill="#d6d6de" font-weight="normal" text-anchor="middle" textLength="34.5" lengthAdjust="spacingAndGlyphs">D-series</text><rect x="964.30" y="266.4" width="60.3" height="121.60" fill="#232327"/><rect x="964.30" y="361.40" width="60.3" height="26.60" fill="#5794f2" fill-opacity="0.35"/><rect x="964.30" y="361.40" width="60.3" height="1.6" fill="#5794f2"/><text x="994.45" y="261.90" font-size="16.3" fill="#5794f2" font-weight="normal" text-anchor="middle" >21.2</text><text x="994.40" y="398.00" font-size="9.0" fill="#d6d6de" font-weight="normal" text-anchor="middle" textLength="34.5" lengthAdjust="spacingAndGlyphs">E-series</text><text x="519.80" y="426.10" font-size="9.0" fill="#d6d6de" font-weight="normal" text-anchor="middle" stroke="#d6d6de" stroke-width="0.3" textLength="100.0" lengthAdjust="spacingAndGlyphs">client side full page load</text><line x1="37.0" y1="443.50" x2="918.0" y2="443.50" stroke="#27382c" stroke-width="1"/><text x="33.00" y="446.20" font-size="7.4" fill="#cacad4" font-weight="normal" text-anchor="end" >5 s</text><line x1="37.0" y1="465.02" x2="918.0" y2="465.02" stroke="#27382c" stroke-width="1"/><text x="33.00" y="467.72" font-size="7.4" fill="#cacad4" font-weight="normal" text-anchor="end" >4 s</text><line x1="37.0" y1="486.54" x2="918.0" y2="486.54" stroke="#27382c" stroke-width="1"/><text x="33.00" y="489.24" font-size="7.4" fill="#cacad4" font-weight="normal" text-anchor="end" >3 s</text><line x1="37.0" y1="508.06" x2="918.0" y2="508.06" stroke="#27382c" stroke-width="1"/><text x="33.00" y="510.76" font-size="7.4" fill="#cacad4" font-weight="normal" text-anchor="end" >2 s</text><line x1="37.0" y1="529.58" x2="918.0" y2="529.58" stroke="#27382c" stroke-width="1"/><text x="33.00" y="532.28" font-size="7.4" fill="#cacad4" font-weight="normal" text-anchor="end" >1 s</text><line x1="37.0" y1="551.10" x2="918.0" y2="551.10" stroke="#27382c" stroke-width="1"/><text x="33.00" y="553.80" font-size="7.4" fill="#cacad4" font-weight="normal" text-anchor="end" >0 ms</text><line x1="39.80" y1="443.5" x2="39.80" y2="551.1" stroke="#27382c" stroke-width="1"/><text x="39.80" y="562.40" font-size="7.7" fill="#cacad4" font-weight="normal" text-anchor="middle" >16:50</text><line x1="113.20" y1="443.5" x2="113.20" y2="551.1" stroke="#27382c" stroke-width="1"/><text x="113.20" y="562.40" font-size="7.7" fill="#cacad4" font-weight="normal" text-anchor="middle" >16:55</text><line x1="186.60" y1="443.5" x2="186.60" y2="551.1" stroke="#27382c" stroke-width="1"/><text x="186.60" y="562.40" font-size="7.7" fill="#cacad4" font-weight="normal" text-anchor="middle" >17:00</text><line x1="260.00" y1="443.5" x2="260.00" y2="551.1" stroke="#27382c" stroke-width="1"/><text x="260.00" y="562.40" font-size="7.7" fill="#cacad4" font-weight="normal" text-anchor="middle" >17:05</text><line x1="333.40" y1="443.5" x2="333.40" y2="551.1" stroke="#27382c" stroke-width="1"/><text x="333.40" y="562.40" font-size="7.7" fill="#cacad4" font-weight="normal" text-anchor="middle" >17:10</text><line x1="406.80" y1="443.5" x2="406.80" y2="551.1" stroke="#27382c" stroke-width="1"/><text x="406.80" y="562.40" font-size="7.7" fill="#cacad4" font-weight="normal" text-anchor="middle" >17:15</text><line x1="480.20" y1="443.5" x2="480.20" y2="551.1" stroke="#27382c" stroke-width="1"/><text x="480.20" y="562.40" font-size="7.7" fill="#cacad4" font-weight="normal" text-anchor="middle" >17:20</text><line x1="553.60" y1="443.5" x2="553.60" y2="551.1" stroke="#27382c" stroke-width="1"/><text x="553.60" y="562.40" font-size="7.7" fill="#cacad4" font-weight="normal" text-anchor="middle" >17:25</text><line x1="627.00" y1="443.5" x2="627.00" y2="551.1" stroke="#27382c" stroke-width="1"/><text x="627.00" y="562.40" font-size="7.7" fill="#cacad4" font-weight="normal" text-anchor="middle" >17:30</text><line x1="700.40" y1="443.5" x2="700.40" y2="551.1" stroke="#27382c" stroke-width="1"/><text x="700.40" y="562.40" font-size="7.7" fill="#cacad4" font-weight="normal" text-anchor="middle" >17:35</text><line x1="773.80" y1="443.5" x2="773.80" y2="551.1" stroke="#27382c" stroke-width="1"/><text x="773.80" y="562.40" font-size="7.7" fill="#cacad4" font-weight="normal" text-anchor="middle" >17:40</text><line x1="847.20" y1="443.5" x2="847.20" y2="551.1" stroke="#27382c" stroke-width="1"/><text x="847.20" y="562.40" font-size="7.7" fill="#cacad4" font-weight="normal" text-anchor="middle" >17:45</text><clipPath id="cc"><rect x="37.0" y="400" width="881.0" height="200"/></clipPath><g clip-path="url(#cc)"><rect x="10.25" y="479" width="39.5" height="36.00" fill="#e24d42"/><rect x="10.25" y="515" width="39.5" height="22.50" fill="#ee8439"/><rect x="10.25" y="537.5" width="39.5" height="10.50" fill="#eab93c"/><rect x="10.25" y="548" width="39.5" height="3.1" fill="#f4d28c"/><rect x="68.95" y="505.5" width="39.5" height="19.50" fill="#e24d42"/><rect x="68.95" y="525" width="39.5" height="16.50" fill="#ee8439"/><rect x="68.95" y="541.5" width="39.5" height="6.50" fill="#eab93c"/><rect x="68.95" y="548" width="39.5" height="3.1" fill="#f4d28c"/><rect x="127.65" y="483.5" width="39.5" height="31.50" fill="#e24d42"/><rect x="127.65" y="515" width="39.5" height="21.50" fill="#ee8439"/><rect x="127.65" y="536.5" width="39.5" height="11.50" fill="#eab93c"/><rect x="127.65" y="548" width="39.5" height="3.1" fill="#f4d28c"/><rect x="186.35" y="485" width="39.5" height="30.50" fill="#e24d42"/><rect x="186.35" y="515.5" width="39.5" height="22.00" fill="#ee8439"/><rect x="186.35" y="537.5" width="39.5" height="10.50" fill="#eab93c"/><rect x="186.35" y="548" width="39.5" height="3.1" fill="#f4d28c"/><rect x="245.05" y="490.5" width="39.5" height="28.00" fill="#e24d42"/><rect x="245.05" y="518.5" width="39.5" height="20.50" fill="#ee8439"/><rect x="245.05" y="539" width="39.5" height="9.00" fill="#eab93c"/><rect x="245.05" y="548" width="39.5" height="3.1" fill="#f4d28c"/><rect x="303.75" y="492.5" width="39.5" height="24.50" fill="#e24d42"/><rect x="303.75" y="517" width="39.5" height="20.50" fill="#ee8439"/><rect x="303.75" y="537.5" width="39.5" height="10.50" fill="#eab93c"/><rect x="303.75" y="548" width="39.5" height="3.1" fill="#f4d28c"/><rect x="362.45" y="492.5" width="39.5" height="28.50" fill="#e24d42"/><rect x="362.45" y="521" width="39.5" height="17.50" fill="#ee8439"/><rect x="362.45" y="538.5" width="39.5" height="9.50" fill="#eab93c"/><rect x="362.45" y="548" width="39.5" height="3.1" fill="#f4d28c"/><rect x="421.15" y="484" width="39.5" height="29.00" fill="#e24d42"/><rect x="421.15" y="513" width="39.5" height="23.50" fill="#ee8439"/><rect x="421.15" y="536.5" width="39.5" height="11.50" fill="#eab93c"/><rect x="421.15" y="548" width="39.5" height="3.1" fill="#f4d28c"/><rect x="479.85" y="466" width="39.5" height="40.00" fill="#e24d42"/><rect x="479.85" y="506" width="39.5" height="28.50" fill="#ee8439"/><rect x="479.85" y="534.5" width="39.5" height="13.50" fill="#eab93c"/><rect x="479.85" y="548" width="39.5" height="3.1" fill="#f4d28c"/><rect x="538.55" y="489" width="39.5" height="27.00" fill="#e24d42"/><rect x="538.55" y="516" width="39.5" height="20.00" fill="#ee8439"/><rect x="538.55" y="536" width="39.5" height="12.00" fill="#eab93c"/><rect x="538.55" y="548" width="39.5" height="3.1" fill="#f4d28c"/><rect x="597.25" y="466" width="39.5" height="38.00" fill="#e24d42"/><rect x="597.25" y="504" width="39.5" height="28.00" fill="#ee8439"/><rect x="597.25" y="532" width="39.5" height="16.00" fill="#eab93c"/><rect x="597.25" y="548" width="39.5" height="3.1" fill="#f4d28c"/><rect x="655.95" y="483" width="39.5" height="32.00" fill="#e24d42"/><rect x="655.95" y="515" width="39.5" height="24.00" fill="#ee8439"/><rect x="655.95" y="539" width="39.5" height="9.00" fill="#eab93c"/><rect x="655.95" y="548" width="39.5" height="3.1" fill="#f4d28c"/><rect x="714.65" y="468.5" width="39.5" height="41.00" fill="#e24d42"/><rect x="714.65" y="509.5" width="39.5" height="25.50" fill="#ee8439"/><rect x="714.65" y="535" width="39.5" height="13.00" fill="#eab93c"/><rect x="714.65" y="548" width="39.5" height="3.1" fill="#f4d28c"/><rect x="773.35" y="480.5" width="39.5" height="29.50" fill="#e24d42"/><rect x="773.35" y="510" width="39.5" height="22.50" fill="#ee8439"/><rect x="773.35" y="532.5" width="39.5" height="15.50" fill="#eab93c"/><rect x="773.35" y="548" width="39.5" height="3.1" fill="#f4d28c"/><rect x="832.05" y="467" width="39.5" height="38.00" fill="#e24d42"/><rect x="832.05" y="505" width="39.5" height="25.00" fill="#ee8439"/><rect x="832.05" y="530" width="39.5" height="18.00" fill="#eab93c"/><rect x="832.05" y="548" width="39.5" height="3.1" fill="#f4d28c"/><rect x="890.75" y="490.5" width="39.5" height="29.50" fill="#e24d42"/><rect x="890.75" y="520" width="39.5" height="21.00" fill="#ee8439"/><rect x="890.75" y="541" width="39.5" height="7.00" fill="#eab93c"/><rect x="890.75" y="548" width="39.5" height="3.1" fill="#f4d28c"/></g><text x="1015.10" y="450.20" font-size="7.9" fill="#3d9bf0" font-weight="normal" text-anchor="end" >avg</text><rect x="932.6" y="460.45" width="8.7" height="2.7" rx="1.35" fill="#fceaca"/><text x="947.70" y="464.10" font-size="7.9" fill="#d6d6de" font-weight="normal" text-anchor="start" >upper_25</text><text x="1020.20" y="464.10" font-size="7.9" fill="#d6d6de" font-weight="normal" text-anchor="end" >6.81 ms</text><rect x="931.8" y="470.08" width="89.4" height="16.6" fill="#222226"/><rect x="932.6" y="477.03" width="8.7" height="2.7" rx="1.35" fill="#f2c96d"/><text x="947.70" y="480.68" font-size="7.9" fill="#d6d6de" font-weight="normal" text-anchor="start" >upper_50</text><text x="1020.20" y="480.68" font-size="7.9" fill="#d6d6de" font-weight="normal" text-anchor="end" >142 ms</text><rect x="932.6" y="493.61" width="8.7" height="2.7" rx="1.35" fill="#eab839"/><text x="947.70" y="497.26" font-size="7.9" fill="#d6d6de" font-weight="normal" text-anchor="start" >upper_75</text><text x="1020.20" y="497.26" font-size="7.9" fill="#d6d6de" font-weight="normal" text-anchor="end" >535 ms</text><rect x="931.8" y="503.24" width="89.4" height="16.6" fill="#222226"/><rect x="932.6" y="510.19" width="8.7" height="2.7" rx="1.35" fill="#ef843c"/><text x="947.70" y="513.84" font-size="7.9" fill="#d6d6de" font-weight="normal" text-anchor="start" >upper_90</text><text x="1020.20" y="513.84" font-size="7.9" fill="#d6d6de" font-weight="normal" text-anchor="end" >1.04 s</text><rect x="932.6" y="526.77" width="8.7" height="2.7" rx="1.35" fill="#e24d42"/><text x="947.70" y="530.42" font-size="7.9" fill="#d6d6de" font-weight="normal" text-anchor="start" >upper_95</text><text x="1020.20" y="530.42" font-size="7.9" fill="#d6d6de" font-weight="normal" text-anchor="end" >1.46 s</text>
</svg>
</body></html>
